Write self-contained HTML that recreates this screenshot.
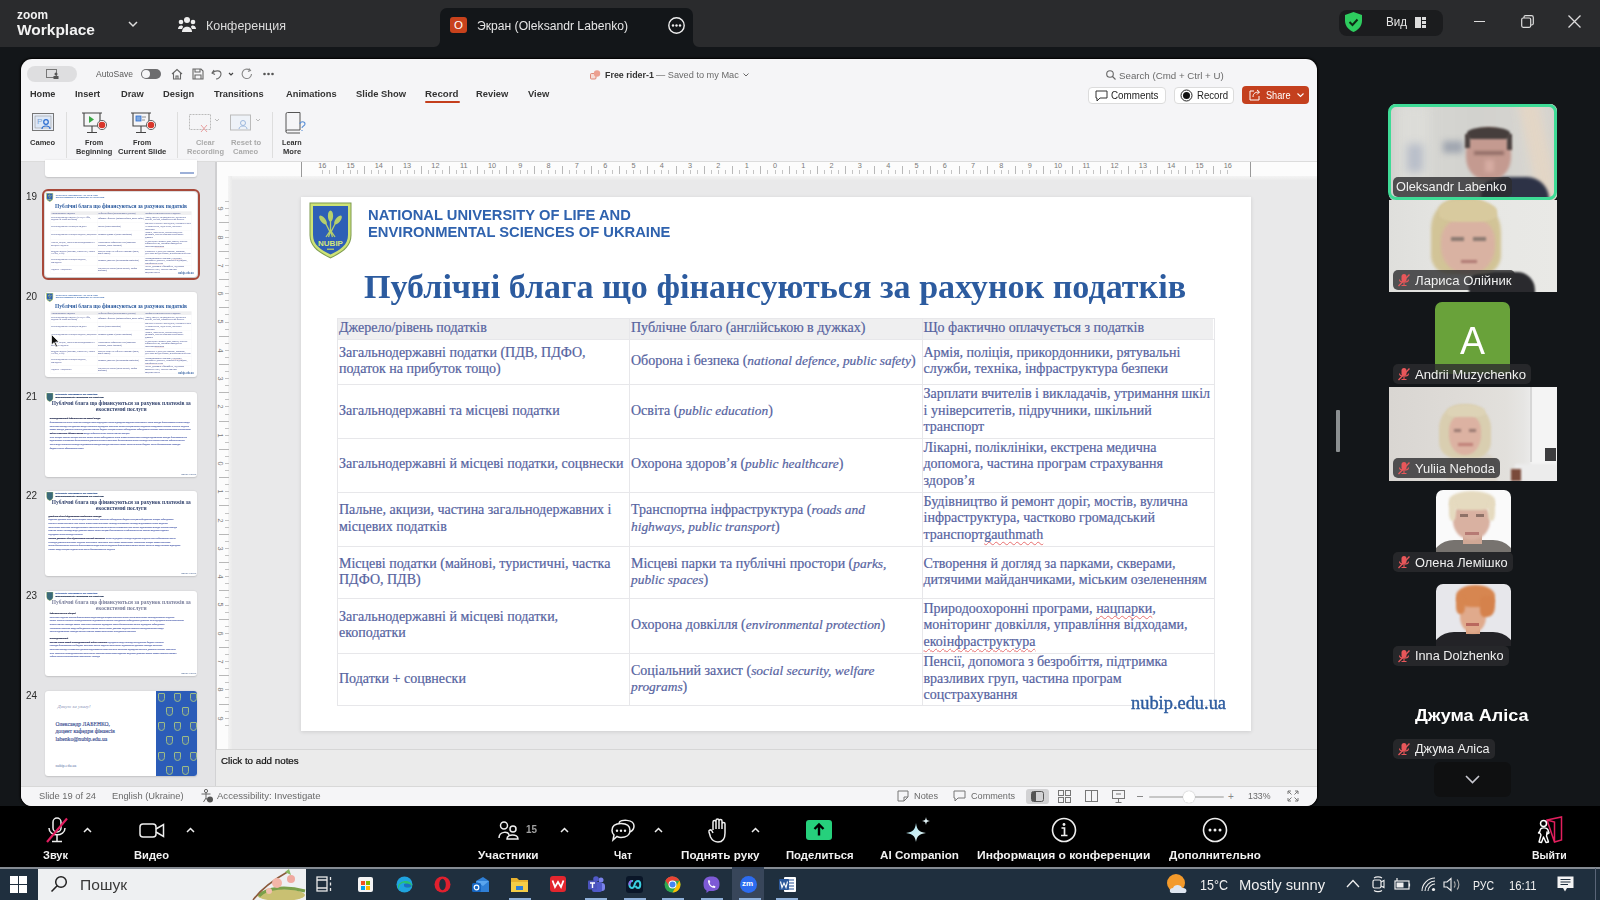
<!DOCTYPE html><html><head><meta charset="utf-8"><style>
*{margin:0;padding:0;box-sizing:border-box}
html,body{width:1600px;height:900px;overflow:hidden;background:#131619;font-family:"Liberation Sans",sans-serif}
.a{position:absolute}
.t{position:absolute;white-space:nowrap;line-height:1}
svg{position:absolute;overflow:visible}
.cell{font-family:'Liberation Serif',serif;font-size:14px;line-height:16.4px;white-space:nowrap;-webkit-text-stroke:0.2px}
.cell i{font-style:italic;font-size:13.4px}
.cell u{text-decoration:underline wavy #e87070;text-decoration-thickness:0.8px;text-underline-offset:2px;text-decoration-skip-ink:none}
</style></head><body>
<div class="a" style="left:0;top:0;width:1600px;height:47px;background:#2a2b2d"></div>
<div class="t" style="left:17.00px;top:7.80px;font-size:13px;color:#f2f2f2;font-weight:bold;transform:scaleX(0.9133);transform-origin:0 0;">zoom</div>
<div class="t" style="left:17.00px;top:22.13px;font-size:15.2px;color:#f2f2f2;font-weight:bold;transform:scaleX(1.0183);transform-origin:0 0;">Workplace</div>
<svg style="left:128px;top:21px" width="10" height="7"><path d="M1 1 L5 5 L9 1" stroke="#ddd" stroke-width="1.5" fill="none"/></svg>
<svg style="left:178px;top:16px" width="18" height="17" viewBox="0 0 18 17"><circle cx="9" cy="4" r="3" fill="#eee"/><circle cx="3" cy="6" r="2.3" fill="#eee"/><circle cx="15" cy="6" r="2.3" fill="#eee"/><path d="M4 16 C4 9 14 9 14 16 Z" fill="#eee"/><path d="M0 13 C0 9 5 8.5 5 11 L4 13Z" fill="#eee"/><path d="M18 13 C18 9 13 8.5 13 11 L14 13Z" fill="#eee"/></svg>
<div class="t" style="left:206.00px;top:20.22px;font-size:12.5px;color:#dcdcdc;transform:scaleX(0.9989);transform-origin:0 0;">Конференция</div>
<div class="a" style="left:440px;top:8px;width:253px;height:39px;background:#131619;border-radius:7px 7px 0 0"></div>
<svg style="left:434px;top:41px" width="6" height="6"><path d="M6 0 L6 6 L0 6 A6 6 0 0 0 6 0 Z" fill="#131619"/></svg>
<svg style="left:693px;top:41px" width="6" height="6"><path d="M0 0 L0 6 L6 6 A6 6 0 0 1 0 0 Z" fill="#131619"/></svg>
<div class="a" style="left:450px;top:17px;width:17px;height:16px;background:#c8421c;border-radius:3px"></div>
<div class="t" style="left:454.03px;top:19.77px;font-size:11.5px;color:#fff;">O</div>
<div class="t" style="left:477.00px;top:19.52px;font-size:12.5px;color:#e6e6e6;transform:scaleX(0.9713);transform-origin:0 0;">Экран (Oleksandr Labenko)</div>
<svg style="left:668px;top:17px" width="17" height="17"><circle cx="8.5" cy="8.5" r="7.7" stroke="#eee" stroke-width="1.4" fill="none"/><circle cx="5" cy="8.5" r="1.2" fill="#eee"/><circle cx="8.5" cy="8.5" r="1.2" fill="#eee"/><circle cx="12" cy="8.5" r="1.2" fill="#eee"/></svg>
<div class="a" style="left:1339px;top:10px;width:104px;height:26px;background:#1b1c1e;border-radius:8px"></div>
<svg style="left:1345px;top:12px" width="17" height="20" viewBox="0 0 17 20"><path d="M8.5 0 L17 3 L17 9 C17 14 13 18 8.5 20 C4 18 0 14 0 9 L0 3 Z" fill="#2ecc5f"/><path d="M4.5 10 L7.5 13 L12.5 7.5" stroke="#0d2a14" stroke-width="2" fill="none"/></svg>
<div class="t" style="left:1385.60px;top:16.42px;font-size:12.5px;color:#e6e6e6;transform:scaleX(0.9286);transform-origin:0 0;">Вид</div>
<svg style="left:1415px;top:17px" width="11" height="11"><rect x="0" y="0" width="6" height="11" fill="#ddd"/><rect x="7" y="0" width="4" height="3" fill="#ddd"/><rect x="7" y="4" width="4" height="3" fill="#ddd"/><rect x="7" y="8" width="4" height="3" fill="#ddd"/></svg>
<div class="a" style="left:1474px;top:21px;width:11px;height:1.3px;background:#ddd"></div>
<svg style="left:1521px;top:15px" width="13" height="13"><rect x="0.7" y="3" width="9" height="9.3" rx="1.5" stroke="#ddd" stroke-width="1.2" fill="none"/><path d="M3 3 L3 2 Q3 0.7 4.5 0.7 L10.5 0.7 Q12.3 0.7 12.3 2.5 L12.3 8.5 Q12.3 10 10.5 10 L9.7 10" stroke="#ddd" stroke-width="1.2" fill="none"/></svg>
<svg style="left:1568px;top:15px" width="13" height="13"><path d="M0.5 0.5 L12.5 12.5 M12.5 0.5 L0.5 12.5" stroke="#ddd" stroke-width="1.3"/></svg>
<div class="a" style="left:21px;top:59px;width:1296px;height:747px;background:#f5f5f7;border-radius:11px;box-shadow:0 0 2px 1px #000"></div>
<div class="a" style="left:27px;top:66px;width:50px;height:16px;background:#dedee0;border-radius:8px"></div>
<svg style="left:46px;top:69px" width="13" height="10"><rect x="0.5" y="0.5" width="10" height="8" stroke="#777" fill="none"/><circle cx="10" cy="5" r="1.5" fill="#555"/><rect x="7.5" y="7" width="5" height="3" fill="#555"/></svg>
<div class="t" style="left:96.40px;top:69.95px;font-size:8.8px;color:#5a5a5a;transform:scaleX(0.9696);transform-origin:0 0;">AutoSave</div>
<div class="a" style="left:141px;top:69px;width:20px;height:10px;background:#6d6d6f;border-radius:5px"></div>
<div class="a" style="left:142px;top:70px;width:8px;height:8px;background:#f5f5f7;border-radius:50%"></div>
<svg style="left:171px;top:68px" width="12" height="12"><path d="M1 6 L6 1.5 L11 6 M2.5 5 L2.5 11 L9.5 11 L9.5 5 M5 11 L5 8 L7 8 L7 11" stroke="#666" stroke-width="1.1" fill="none"/></svg>
<svg style="left:192px;top:68px" width="12" height="12"><path d="M1 1 L9 1 L11 3 L11 11 L1 11 Z M3 1 L3 4 L8 4 L8 1 M3 11 L3 7 L9 7 L9 11" stroke="#666" stroke-width="1.1" fill="none"/></svg>
<svg style="left:211px;top:68px" width="24" height="12"><path d="M3 2 L1 5 L4 6.5 M1.5 5 C4 2 10 2 10 6 C10 9 7 11 5 11" stroke="#666" stroke-width="1.1" fill="none"/><path d="M18 5 L20 7 L22 5" stroke="#444" stroke-width="1.2" fill="none"/></svg>
<svg style="left:241px;top:68px" width="12" height="12"><path d="M10.5 6 A4.7 4.7 0 1 1 8.5 2 M8 0.5 L9.5 2.5 L7 3.5" stroke="#888" stroke-width="1.1" fill="none"/></svg>
<svg style="left:263px;top:72px" width="11" height="4"><circle cx="1.5" cy="2" r="1.3" fill="#555"/><circle cx="5.5" cy="2" r="1.3" fill="#555"/><circle cx="9.5" cy="2" r="1.3" fill="#555"/></svg>
<svg style="left:590px;top:69px" width="11" height="11"><rect x="0.5" y="4.5" width="5.5" height="5.5" rx="1" fill="#f6dcd6" stroke="#d7705a" stroke-width="0.8"/><circle cx="7" cy="4.5" r="3.2" fill="#eca090"/></svg>
<div class="t" style="left:604.50px;top:70.04px;font-size:9.4px;color:#333;font-weight:bold;transform:scaleX(0.9473);transform-origin:0 0;">Free rider-1</div>
<div class="t" style="left:656.00px;top:70.04px;font-size:9.4px;color:#6a6a6a;transform:scaleX(0.9808);transform-origin:0 0;">— Saved to my Mac</div>
<svg style="left:743px;top:73px" width="6" height="4"><path d="M0.5 0.5 L3 3 L5.5 0.5" stroke="#666" stroke-width="1" fill="none"/></svg>
<svg style="left:1106px;top:70px" width="10" height="10"><circle cx="4" cy="4" r="3.3" stroke="#666" stroke-width="1.1" fill="none"/><path d="M6.5 6.5 L9.5 9.5" stroke="#666" stroke-width="1.1"/></svg>
<div class="t" style="left:1119.00px;top:70.54px;font-size:9.4px;color:#6a6a6a;transform:scaleX(1.0361);transform-origin:0 0;">Search (Cmd + Ctrl + U)</div>
<div class="t" style="left:29.75px;top:89.27px;font-size:9.6px;color:#333;font-weight:bold;transform:scaleX(0.9542);transform-origin:0 0;">Home</div>
<div class="t" style="left:75.25px;top:89.27px;font-size:9.6px;color:#333;font-weight:bold;transform:scaleX(0.9639);transform-origin:0 0;">Insert</div>
<div class="t" style="left:120.75px;top:89.27px;font-size:9.6px;color:#333;font-weight:bold;transform:scaleX(0.9691);transform-origin:0 0;">Draw</div>
<div class="t" style="left:162.70px;top:89.27px;font-size:9.6px;color:#333;font-weight:bold;transform:scaleX(0.9748);transform-origin:0 0;">Design</div>
<div class="t" style="left:214.20px;top:89.27px;font-size:9.6px;color:#333;font-weight:bold;transform:scaleX(0.9685);transform-origin:0 0;">Transitions</div>
<div class="t" style="left:285.50px;top:89.27px;font-size:9.6px;color:#333;font-weight:bold;transform:scaleX(0.9699);transform-origin:0 0;">Animations</div>
<div class="t" style="left:356.00px;top:89.27px;font-size:9.6px;color:#333;font-weight:bold;transform:scaleX(0.9803);transform-origin:0 0;">Slide Show</div>
<div class="t" style="left:425.00px;top:89.27px;font-size:9.6px;color:#333;font-weight:bold;transform:scaleX(1.0113);transform-origin:0 0;">Record</div>
<div class="t" style="left:476.25px;top:89.27px;font-size:9.6px;color:#333;font-weight:bold;transform:scaleX(0.9733);transform-origin:0 0;">Review</div>
<div class="t" style="left:527.50px;top:89.27px;font-size:9.6px;color:#333;font-weight:bold;transform:scaleX(0.9768);transform-origin:0 0;">View</div>
<div class="a" style="left:425px;top:101px;width:35px;height:2px;background:#c43e1c;border-radius:1px"></div>
<div class="a" style="left:1088px;top:87px;width:78px;height:17px;background:#fff;border:1px solid #dcdcdc;border-radius:4px"></div>
<svg style="left:1095px;top:90px" width="13" height="12"><path d="M1 1 L12 1 L12 8 L5 8 L2 11 L2 8 L1 8 Z" stroke="#333" stroke-width="1" fill="none"/></svg>
<div class="t" style="left:1111.00px;top:90.83px;font-size:10px;color:#222;transform:scaleX(0.9825);transform-origin:0 0;">Comments</div>
<div class="a" style="left:1174px;top:87px;width:60px;height:17px;background:#fff;border:1px solid #dcdcdc;border-radius:4px"></div>
<svg style="left:1180px;top:89px" width="13" height="13"><circle cx="6.5" cy="6.5" r="5.5" stroke="#222" stroke-width="1" fill="none"/><circle cx="6.5" cy="6.5" r="3.5" fill="#111"/></svg>
<div class="t" style="left:1197.00px;top:90.83px;font-size:10px;color:#222;transform:scaleX(0.9616);transform-origin:0 0;">Record</div>
<div class="a" style="left:1242px;top:86px;width:67px;height:18px;background:#c4401e;border-radius:4px"></div>
<svg style="left:1249px;top:89px" width="12" height="12"><path d="M5 2 L1 2 L1 11 L10 11 L10 7 M4 8 C4 4 7 3 10 3 M8 1 L10.5 3 L8 5.5" stroke="#fff" stroke-width="1" fill="none"/></svg>
<div class="t" style="left:1266.30px;top:90.83px;font-size:10px;color:#fff;transform:scaleX(0.9181);transform-origin:0 0;">Share</div>
<svg style="left:1297px;top:93px" width="7" height="5"><path d="M0.5 0.5 L3.5 3.5 L6.5 0.5" stroke="#fff" stroke-width="1.1" fill="none"/></svg>
<svg style="left:32px;top:113px" width="22" height="19"><rect x="0.5" y="0.5" width="21" height="17" fill="#e8eef8" stroke="#777"/><rect x="3" y="3" width="16" height="12" fill="#dce7f7" stroke="#999" stroke-width="0.6"/><text x="5" y="11" font-size="8" fill="#7aa0d0" font-family="Liberation Sans">P</text><circle cx="14" cy="9" r="2.3" fill="none" stroke="#2b6ccf" stroke-width="1.2"/><path d="M10 16 C10 12 18 12 18 16" fill="none" stroke="#2b6ccf" stroke-width="1.2"/></svg>
<div class="t" style="left:30.40px;top:138.70px;font-size:7.8px;color:#333;font-weight:bold;transform:scaleX(0.9689);transform-origin:0 0;">Cameo</div>
<div class="a" style="left:66px;top:112px;width:1px;height:46px;background:#dedede"></div>
<svg style="left:82px;top:112px" width="26" height="22"><path d="M0 1 L20 1 M2 1 L2 14 L18 14 L18 1 M10 14 L10 20 M5 20.5 L15 20.5" stroke="#444" stroke-width="1.1" fill="none"/><path d="M7 4 L12 7.5 L7 11 Z" fill="#3aa845"/><circle cx="20" cy="13" r="4.6" fill="#fff" stroke="#444" stroke-width="0.8"/><circle cx="20" cy="13" r="3.3" fill="#d9362b"/></svg>
<div class="t" style="left:84.85px;top:138.70px;font-size:7.8px;color:#333;font-weight:bold;transform:scaleX(0.9385);transform-origin:0 0;">From</div>
<div class="t" style="left:75.90px;top:147.70px;font-size:7.8px;color:#333;font-weight:bold;transform:scaleX(0.9494);transform-origin:0 0;">Beginning</div>
<svg style="left:131px;top:112px" width="26" height="22"><path d="M0 1 L20 1 M2 1 L2 14 L18 14 L18 1 M10 14 L10 20 M5 20.5 L15 20.5" stroke="#444" stroke-width="1.1" fill="none"/><rect x="5" y="4" width="5" height="5" fill="#7fa8de" stroke="#2b6ccf" stroke-width="0.8"/><path d="M11 5 L15 5 M11 8 L14 8" stroke="#777" stroke-width="0.8"/><circle cx="20" cy="13" r="4.6" fill="#fff" stroke="#444" stroke-width="0.8"/><circle cx="20" cy="13" r="3.3" fill="#d9362b"/></svg>
<div class="t" style="left:132.85px;top:138.70px;font-size:7.8px;color:#333;font-weight:bold;transform:scaleX(0.9385);transform-origin:0 0;">From</div>
<div class="t" style="left:117.80px;top:147.70px;font-size:7.8px;color:#333;font-weight:bold;transform:scaleX(0.9882);transform-origin:0 0;">Current Slide</div>
<div class="a" style="left:177px;top:112px;width:1px;height:46px;background:#dedede"></div>
<svg style="left:189px;top:114px" width="32" height="20"><rect x="0.5" y="0.5" width="21" height="15" fill="none" stroke="#bbb" stroke-dasharray="2 1"/><path d="M12 11 L18 18 M18 11 L12 18" stroke="#e9a0a0" stroke-width="1"/><path d="M26 5 L28 7 L30 5" stroke="#bbb" fill="none"/></svg>
<div class="t" style="left:195.70px;top:138.70px;font-size:7.8px;color:#aaa;font-weight:bold;transform:scaleX(0.9533);transform-origin:0 0;">Clear</div>
<div class="t" style="left:186.50px;top:147.70px;font-size:7.8px;color:#aaa;font-weight:bold;transform:scaleX(0.9593);transform-origin:0 0;">Recording</div>
<svg style="left:230px;top:112px" width="32" height="22"><rect x="0.5" y="3" width="20" height="15" fill="#eef2f8" stroke="#bbb"/><circle cx="13" cy="11" r="2.5" fill="none" stroke="#9db8de"/><path d="M9 17 C9 13 17 13 17 17" fill="none" stroke="#9db8de"/><path d="M26 7 L28 9 L30 7" stroke="#bbb" fill="none"/></svg>
<div class="t" style="left:230.95px;top:138.70px;font-size:7.8px;color:#aaa;font-weight:bold;transform:scaleX(0.9781);transform-origin:0 0;">Reset to</div>
<div class="t" style="left:233.40px;top:147.70px;font-size:7.8px;color:#aaa;font-weight:bold;transform:scaleX(0.9689);transform-origin:0 0;">Cameo</div>
<div class="a" style="left:272px;top:112px;width:1px;height:46px;background:#dedede"></div>
<svg style="left:285px;top:112px" width="22" height="22"><path d="M1 2 Q1 0.5 2.5 0.5 L15 0.5 L15 18 L2.5 18 Q1 18 1 19.5 Q1 21 2.5 21 L15 21 M1 2 L1 19.5" stroke="#555" stroke-width="1" fill="none"/><path d="M15 12 C15 9 20 9 20 12 C20 14 17 14 17 16 M17 18 L17 19" stroke="#5a8fd6" stroke-width="1.1" fill="none"/></svg>
<div class="t" style="left:282.15px;top:138.70px;font-size:7.8px;color:#333;font-weight:bold;transform:scaleX(0.9275);transform-origin:0 0;">Learn</div>
<div class="t" style="left:282.95px;top:147.70px;font-size:7.8px;color:#333;font-weight:bold;transform:scaleX(0.9712);transform-origin:0 0;">More</div>
<div class="a" style="left:21px;top:161px;width:1296px;height:1px;background:#dcdcdc"></div>
<div class="a" style="left:21px;top:162px;width:194px;height:624px;background:#e4e4e6"></div>
<div class="a" style="left:215px;top:162px;width:1px;height:624px;background:#d2d2d4"></div>
<div class="a" style="left:216px;top:162px;width:1101px;height:587px;background:#e9e9ea"></div>
<div class="a" style="left:216px;top:749px;width:1101px;height:1px;background:#d6d6d6"></div>
<div class="a" style="left:216px;top:750px;width:1101px;height:36px;background:#ebebeb"></div>
<div class="t" style="left:220.50px;top:756.93px;font-size:9.3px;color:#111;transform:scaleX(1.0511);transform-origin:0 0;-webkit-text-stroke:0.2px #111;">Click to add notes</div>
<div class="a" style="left:216px;top:162px;width:1101px;height:14px;background:#fcfcfc"></div>
<div class="a" style="left:228px;top:176px;width:1089px;height:4px;background:linear-gradient(#f4f4f4,#ebebeb)"></div>
<div class="a" style="left:216px;top:162px;width:12px;height:587px;background:#fcfcfc"></div>
<div class="a" style="left:228px;top:176px;width:4px;height:573px;background:linear-gradient(90deg,#f4f4f4,#ebebeb)"></div>
<div class="a" style="left:215px;top:162px;width:1.5px;height:587px;background:#cfcfd1"></div>
<div class="a" style="left:321.7px;top:170px;width:1px;height:3.5px;background:#c4c4c4"></div><div class="a" style="left:328.8px;top:170px;width:1px;height:3.5px;background:#c4c4c4"></div><div class="a" style="left:335.8px;top:166px;width:1px;height:7.5px;background:#b8b8b8"></div><div class="a" style="left:342.9px;top:170px;width:1px;height:3.5px;background:#c4c4c4"></div><div class="a" style="left:350.0px;top:170px;width:1px;height:3.5px;background:#c4c4c4"></div><div class="a" style="left:357.1px;top:170px;width:1px;height:3.5px;background:#c4c4c4"></div><div class="a" style="left:364.1px;top:166px;width:1px;height:7.5px;background:#b8b8b8"></div><div class="a" style="left:371.2px;top:170px;width:1px;height:3.5px;background:#c4c4c4"></div><div class="a" style="left:378.3px;top:170px;width:1px;height:3.5px;background:#c4c4c4"></div><div class="a" style="left:385.4px;top:170px;width:1px;height:3.5px;background:#c4c4c4"></div><div class="a" style="left:392.4px;top:166px;width:1px;height:7.5px;background:#b8b8b8"></div><div class="a" style="left:399.5px;top:170px;width:1px;height:3.5px;background:#c4c4c4"></div><div class="a" style="left:406.6px;top:170px;width:1px;height:3.5px;background:#c4c4c4"></div><div class="a" style="left:413.7px;top:170px;width:1px;height:3.5px;background:#c4c4c4"></div><div class="a" style="left:420.8px;top:166px;width:1px;height:7.5px;background:#b8b8b8"></div><div class="a" style="left:427.8px;top:170px;width:1px;height:3.5px;background:#c4c4c4"></div><div class="a" style="left:434.9px;top:170px;width:1px;height:3.5px;background:#c4c4c4"></div><div class="a" style="left:442.0px;top:170px;width:1px;height:3.5px;background:#c4c4c4"></div><div class="a" style="left:449.1px;top:166px;width:1px;height:7.5px;background:#b8b8b8"></div><div class="a" style="left:456.1px;top:170px;width:1px;height:3.5px;background:#c4c4c4"></div><div class="a" style="left:463.2px;top:170px;width:1px;height:3.5px;background:#c4c4c4"></div><div class="a" style="left:470.3px;top:170px;width:1px;height:3.5px;background:#c4c4c4"></div><div class="a" style="left:477.3px;top:166px;width:1px;height:7.5px;background:#b8b8b8"></div><div class="a" style="left:484.4px;top:170px;width:1px;height:3.5px;background:#c4c4c4"></div><div class="a" style="left:491.5px;top:170px;width:1px;height:3.5px;background:#c4c4c4"></div><div class="a" style="left:498.6px;top:170px;width:1px;height:3.5px;background:#c4c4c4"></div><div class="a" style="left:505.6px;top:166px;width:1px;height:7.5px;background:#b8b8b8"></div><div class="a" style="left:512.7px;top:170px;width:1px;height:3.5px;background:#c4c4c4"></div><div class="a" style="left:519.8px;top:170px;width:1px;height:3.5px;background:#c4c4c4"></div><div class="a" style="left:526.9px;top:170px;width:1px;height:3.5px;background:#c4c4c4"></div><div class="a" style="left:534.0px;top:166px;width:1px;height:7.5px;background:#b8b8b8"></div><div class="a" style="left:541.0px;top:170px;width:1px;height:3.5px;background:#c4c4c4"></div><div class="a" style="left:548.1px;top:170px;width:1px;height:3.5px;background:#c4c4c4"></div><div class="a" style="left:555.2px;top:170px;width:1px;height:3.5px;background:#c4c4c4"></div><div class="a" style="left:562.2px;top:166px;width:1px;height:7.5px;background:#b8b8b8"></div><div class="a" style="left:569.3px;top:170px;width:1px;height:3.5px;background:#c4c4c4"></div><div class="a" style="left:576.4px;top:170px;width:1px;height:3.5px;background:#c4c4c4"></div><div class="a" style="left:583.5px;top:170px;width:1px;height:3.5px;background:#c4c4c4"></div><div class="a" style="left:590.5px;top:166px;width:1px;height:7.5px;background:#b8b8b8"></div><div class="a" style="left:597.6px;top:170px;width:1px;height:3.5px;background:#c4c4c4"></div><div class="a" style="left:604.7px;top:170px;width:1px;height:3.5px;background:#c4c4c4"></div><div class="a" style="left:611.8px;top:170px;width:1px;height:3.5px;background:#c4c4c4"></div><div class="a" style="left:618.9px;top:166px;width:1px;height:7.5px;background:#b8b8b8"></div><div class="a" style="left:625.9px;top:170px;width:1px;height:3.5px;background:#c4c4c4"></div><div class="a" style="left:633.0px;top:170px;width:1px;height:3.5px;background:#c4c4c4"></div><div class="a" style="left:640.1px;top:170px;width:1px;height:3.5px;background:#c4c4c4"></div><div class="a" style="left:647.1px;top:166px;width:1px;height:7.5px;background:#b8b8b8"></div><div class="a" style="left:654.2px;top:170px;width:1px;height:3.5px;background:#c4c4c4"></div><div class="a" style="left:661.3px;top:170px;width:1px;height:3.5px;background:#c4c4c4"></div><div class="a" style="left:668.4px;top:170px;width:1px;height:3.5px;background:#c4c4c4"></div><div class="a" style="left:675.5px;top:166px;width:1px;height:7.5px;background:#b8b8b8"></div><div class="a" style="left:682.5px;top:170px;width:1px;height:3.5px;background:#c4c4c4"></div><div class="a" style="left:689.6px;top:170px;width:1px;height:3.5px;background:#c4c4c4"></div><div class="a" style="left:696.7px;top:170px;width:1px;height:3.5px;background:#c4c4c4"></div><div class="a" style="left:703.8px;top:166px;width:1px;height:7.5px;background:#b8b8b8"></div><div class="a" style="left:710.8px;top:170px;width:1px;height:3.5px;background:#c4c4c4"></div><div class="a" style="left:717.9px;top:170px;width:1px;height:3.5px;background:#c4c4c4"></div><div class="a" style="left:725.0px;top:170px;width:1px;height:3.5px;background:#c4c4c4"></div><div class="a" style="left:732.0px;top:166px;width:1px;height:7.5px;background:#b8b8b8"></div><div class="a" style="left:739.1px;top:170px;width:1px;height:3.5px;background:#c4c4c4"></div><div class="a" style="left:746.2px;top:170px;width:1px;height:3.5px;background:#c4c4c4"></div><div class="a" style="left:753.3px;top:170px;width:1px;height:3.5px;background:#c4c4c4"></div><div class="a" style="left:760.4px;top:166px;width:1px;height:7.5px;background:#b8b8b8"></div><div class="a" style="left:767.4px;top:170px;width:1px;height:3.5px;background:#c4c4c4"></div><div class="a" style="left:774.5px;top:170px;width:1px;height:3.5px;background:#c4c4c4"></div><div class="a" style="left:781.6px;top:170px;width:1px;height:3.5px;background:#c4c4c4"></div><div class="a" style="left:788.6px;top:166px;width:1px;height:7.5px;background:#b8b8b8"></div><div class="a" style="left:795.7px;top:170px;width:1px;height:3.5px;background:#c4c4c4"></div><div class="a" style="left:802.8px;top:170px;width:1px;height:3.5px;background:#c4c4c4"></div><div class="a" style="left:809.9px;top:170px;width:1px;height:3.5px;background:#c4c4c4"></div><div class="a" style="left:817.0px;top:166px;width:1px;height:7.5px;background:#b8b8b8"></div><div class="a" style="left:824.0px;top:170px;width:1px;height:3.5px;background:#c4c4c4"></div><div class="a" style="left:831.1px;top:170px;width:1px;height:3.5px;background:#c4c4c4"></div><div class="a" style="left:838.2px;top:170px;width:1px;height:3.5px;background:#c4c4c4"></div><div class="a" style="left:845.2px;top:166px;width:1px;height:7.5px;background:#b8b8b8"></div><div class="a" style="left:852.3px;top:170px;width:1px;height:3.5px;background:#c4c4c4"></div><div class="a" style="left:859.4px;top:170px;width:1px;height:3.5px;background:#c4c4c4"></div><div class="a" style="left:866.5px;top:170px;width:1px;height:3.5px;background:#c4c4c4"></div><div class="a" style="left:873.5px;top:166px;width:1px;height:7.5px;background:#b8b8b8"></div><div class="a" style="left:880.6px;top:170px;width:1px;height:3.5px;background:#c4c4c4"></div><div class="a" style="left:887.7px;top:170px;width:1px;height:3.5px;background:#c4c4c4"></div><div class="a" style="left:894.8px;top:170px;width:1px;height:3.5px;background:#c4c4c4"></div><div class="a" style="left:901.9px;top:166px;width:1px;height:7.5px;background:#b8b8b8"></div><div class="a" style="left:908.9px;top:170px;width:1px;height:3.5px;background:#c4c4c4"></div><div class="a" style="left:916.0px;top:170px;width:1px;height:3.5px;background:#c4c4c4"></div><div class="a" style="left:923.1px;top:170px;width:1px;height:3.5px;background:#c4c4c4"></div><div class="a" style="left:930.1px;top:166px;width:1px;height:7.5px;background:#b8b8b8"></div><div class="a" style="left:937.2px;top:170px;width:1px;height:3.5px;background:#c4c4c4"></div><div class="a" style="left:944.3px;top:170px;width:1px;height:3.5px;background:#c4c4c4"></div><div class="a" style="left:951.4px;top:170px;width:1px;height:3.5px;background:#c4c4c4"></div><div class="a" style="left:958.5px;top:166px;width:1px;height:7.5px;background:#b8b8b8"></div><div class="a" style="left:965.5px;top:170px;width:1px;height:3.5px;background:#c4c4c4"></div><div class="a" style="left:972.6px;top:170px;width:1px;height:3.5px;background:#c4c4c4"></div><div class="a" style="left:979.7px;top:170px;width:1px;height:3.5px;background:#c4c4c4"></div><div class="a" style="left:986.8px;top:166px;width:1px;height:7.5px;background:#b8b8b8"></div><div class="a" style="left:993.8px;top:170px;width:1px;height:3.5px;background:#c4c4c4"></div><div class="a" style="left:1000.9px;top:170px;width:1px;height:3.5px;background:#c4c4c4"></div><div class="a" style="left:1008.0px;top:170px;width:1px;height:3.5px;background:#c4c4c4"></div><div class="a" style="left:1015.0px;top:166px;width:1px;height:7.5px;background:#b8b8b8"></div><div class="a" style="left:1022.1px;top:170px;width:1px;height:3.5px;background:#c4c4c4"></div><div class="a" style="left:1029.2px;top:170px;width:1px;height:3.5px;background:#c4c4c4"></div><div class="a" style="left:1036.3px;top:170px;width:1px;height:3.5px;background:#c4c4c4"></div><div class="a" style="left:1043.3px;top:166px;width:1px;height:7.5px;background:#b8b8b8"></div><div class="a" style="left:1050.4px;top:170px;width:1px;height:3.5px;background:#c4c4c4"></div><div class="a" style="left:1057.5px;top:170px;width:1px;height:3.5px;background:#c4c4c4"></div><div class="a" style="left:1064.6px;top:170px;width:1px;height:3.5px;background:#c4c4c4"></div><div class="a" style="left:1071.7px;top:166px;width:1px;height:7.5px;background:#b8b8b8"></div><div class="a" style="left:1078.7px;top:170px;width:1px;height:3.5px;background:#c4c4c4"></div><div class="a" style="left:1085.8px;top:170px;width:1px;height:3.5px;background:#c4c4c4"></div><div class="a" style="left:1092.9px;top:170px;width:1px;height:3.5px;background:#c4c4c4"></div><div class="a" style="left:1100.0px;top:166px;width:1px;height:7.5px;background:#b8b8b8"></div><div class="a" style="left:1107.0px;top:170px;width:1px;height:3.5px;background:#c4c4c4"></div><div class="a" style="left:1114.1px;top:170px;width:1px;height:3.5px;background:#c4c4c4"></div><div class="a" style="left:1121.2px;top:170px;width:1px;height:3.5px;background:#c4c4c4"></div><div class="a" style="left:1128.2px;top:166px;width:1px;height:7.5px;background:#b8b8b8"></div><div class="a" style="left:1135.3px;top:170px;width:1px;height:3.5px;background:#c4c4c4"></div><div class="a" style="left:1142.4px;top:170px;width:1px;height:3.5px;background:#c4c4c4"></div><div class="a" style="left:1149.5px;top:170px;width:1px;height:3.5px;background:#c4c4c4"></div><div class="a" style="left:1156.5px;top:166px;width:1px;height:7.5px;background:#b8b8b8"></div><div class="a" style="left:1163.6px;top:170px;width:1px;height:3.5px;background:#c4c4c4"></div><div class="a" style="left:1170.7px;top:170px;width:1px;height:3.5px;background:#c4c4c4"></div><div class="a" style="left:1177.8px;top:170px;width:1px;height:3.5px;background:#c4c4c4"></div><div class="a" style="left:1184.8px;top:166px;width:1px;height:7.5px;background:#b8b8b8"></div><div class="a" style="left:1191.9px;top:170px;width:1px;height:3.5px;background:#c4c4c4"></div><div class="a" style="left:1199.0px;top:170px;width:1px;height:3.5px;background:#c4c4c4"></div><div class="a" style="left:1206.1px;top:170px;width:1px;height:3.5px;background:#c4c4c4"></div><div class="a" style="left:1213.2px;top:166px;width:1px;height:7.5px;background:#b8b8b8"></div><div class="a" style="left:1220.2px;top:170px;width:1px;height:3.5px;background:#c4c4c4"></div><div class="a" style="left:1227.3px;top:170px;width:1px;height:3.5px;background:#c4c4c4"></div>
<div class="t" style="left:318.14px;top:161.62px;font-size:7.3px;color:#7a7a7a;">16</div>
<div class="t" style="left:346.44px;top:161.62px;font-size:7.3px;color:#7a7a7a;">15</div>
<div class="t" style="left:374.74px;top:161.62px;font-size:7.3px;color:#7a7a7a;">14</div>
<div class="t" style="left:403.04px;top:161.62px;font-size:7.3px;color:#7a7a7a;">13</div>
<div class="t" style="left:431.34px;top:161.62px;font-size:7.3px;color:#7a7a7a;">12</div>
<div class="t" style="left:459.91px;top:161.62px;font-size:7.3px;color:#7a7a7a;">11</div>
<div class="t" style="left:487.94px;top:161.62px;font-size:7.3px;color:#7a7a7a;">10</div>
<div class="t" style="left:518.27px;top:161.62px;font-size:7.3px;color:#7a7a7a;">9</div>
<div class="t" style="left:546.57px;top:161.62px;font-size:7.3px;color:#7a7a7a;">8</div>
<div class="t" style="left:574.87px;top:161.62px;font-size:7.3px;color:#7a7a7a;">7</div>
<div class="t" style="left:603.17px;top:161.62px;font-size:7.3px;color:#7a7a7a;">6</div>
<div class="t" style="left:631.47px;top:161.62px;font-size:7.3px;color:#7a7a7a;">5</div>
<div class="t" style="left:659.77px;top:161.62px;font-size:7.3px;color:#7a7a7a;">4</div>
<div class="t" style="left:688.07px;top:161.62px;font-size:7.3px;color:#7a7a7a;">3</div>
<div class="t" style="left:716.37px;top:161.62px;font-size:7.3px;color:#7a7a7a;">2</div>
<div class="t" style="left:744.67px;top:161.62px;font-size:7.3px;color:#7a7a7a;">1</div>
<div class="t" style="left:772.97px;top:161.62px;font-size:7.3px;color:#7a7a7a;">0</div>
<div class="t" style="left:801.27px;top:161.62px;font-size:7.3px;color:#7a7a7a;">1</div>
<div class="t" style="left:829.57px;top:161.62px;font-size:7.3px;color:#7a7a7a;">2</div>
<div class="t" style="left:857.87px;top:161.62px;font-size:7.3px;color:#7a7a7a;">3</div>
<div class="t" style="left:886.17px;top:161.62px;font-size:7.3px;color:#7a7a7a;">4</div>
<div class="t" style="left:914.47px;top:161.62px;font-size:7.3px;color:#7a7a7a;">5</div>
<div class="t" style="left:942.77px;top:161.62px;font-size:7.3px;color:#7a7a7a;">6</div>
<div class="t" style="left:971.07px;top:161.62px;font-size:7.3px;color:#7a7a7a;">7</div>
<div class="t" style="left:999.37px;top:161.62px;font-size:7.3px;color:#7a7a7a;">8</div>
<div class="t" style="left:1027.67px;top:161.62px;font-size:7.3px;color:#7a7a7a;">9</div>
<div class="t" style="left:1053.94px;top:161.62px;font-size:7.3px;color:#7a7a7a;">10</div>
<div class="t" style="left:1082.51px;top:161.62px;font-size:7.3px;color:#7a7a7a;">11</div>
<div class="t" style="left:1110.54px;top:161.62px;font-size:7.3px;color:#7a7a7a;">12</div>
<div class="t" style="left:1138.84px;top:161.62px;font-size:7.3px;color:#7a7a7a;">13</div>
<div class="t" style="left:1167.14px;top:161.62px;font-size:7.3px;color:#7a7a7a;">14</div>
<div class="t" style="left:1195.44px;top:161.62px;font-size:7.3px;color:#7a7a7a;">15</div>
<div class="t" style="left:1223.74px;top:161.62px;font-size:7.3px;color:#7a7a7a;">16</div>
<div class="a" style="left:300.5px;top:162px;width:1px;height:15px;background:#999"></div>
<div class="a" style="left:1249.5px;top:162px;width:1px;height:15px;background:#999"></div>
<div class="a" style="left:225px;top:201.2px;width:3.5px;height:1px;background:#c4c4c4"></div><div class="a" style="left:225px;top:208.3px;width:3.5px;height:1px;background:#c4c4c4"></div><div class="a" style="left:225px;top:215.4px;width:3.5px;height:1px;background:#c4c4c4"></div><div class="a" style="left:219px;top:222.4px;width:9.5px;height:1px;background:#b8b8b8"></div><div class="a" style="left:225px;top:229.5px;width:3.5px;height:1px;background:#c4c4c4"></div><div class="a" style="left:225px;top:236.6px;width:3.5px;height:1px;background:#c4c4c4"></div><div class="a" style="left:225px;top:243.7px;width:3.5px;height:1px;background:#c4c4c4"></div><div class="a" style="left:219px;top:250.8px;width:9.5px;height:1px;background:#b8b8b8"></div><div class="a" style="left:225px;top:257.8px;width:3.5px;height:1px;background:#c4c4c4"></div><div class="a" style="left:225px;top:264.9px;width:3.5px;height:1px;background:#c4c4c4"></div><div class="a" style="left:225px;top:272.0px;width:3.5px;height:1px;background:#c4c4c4"></div><div class="a" style="left:219px;top:279.0px;width:9.5px;height:1px;background:#b8b8b8"></div><div class="a" style="left:225px;top:286.1px;width:3.5px;height:1px;background:#c4c4c4"></div><div class="a" style="left:225px;top:293.2px;width:3.5px;height:1px;background:#c4c4c4"></div><div class="a" style="left:225px;top:300.3px;width:3.5px;height:1px;background:#c4c4c4"></div><div class="a" style="left:219px;top:307.4px;width:9.5px;height:1px;background:#b8b8b8"></div><div class="a" style="left:225px;top:314.4px;width:3.5px;height:1px;background:#c4c4c4"></div><div class="a" style="left:225px;top:321.5px;width:3.5px;height:1px;background:#c4c4c4"></div><div class="a" style="left:225px;top:328.6px;width:3.5px;height:1px;background:#c4c4c4"></div><div class="a" style="left:219px;top:335.6px;width:9.5px;height:1px;background:#b8b8b8"></div><div class="a" style="left:225px;top:342.7px;width:3.5px;height:1px;background:#c4c4c4"></div><div class="a" style="left:225px;top:349.8px;width:3.5px;height:1px;background:#c4c4c4"></div><div class="a" style="left:225px;top:356.9px;width:3.5px;height:1px;background:#c4c4c4"></div><div class="a" style="left:219px;top:363.9px;width:9.5px;height:1px;background:#b8b8b8"></div><div class="a" style="left:225px;top:371.0px;width:3.5px;height:1px;background:#c4c4c4"></div><div class="a" style="left:225px;top:378.1px;width:3.5px;height:1px;background:#c4c4c4"></div><div class="a" style="left:225px;top:385.2px;width:3.5px;height:1px;background:#c4c4c4"></div><div class="a" style="left:219px;top:392.2px;width:9.5px;height:1px;background:#b8b8b8"></div><div class="a" style="left:225px;top:399.3px;width:3.5px;height:1px;background:#c4c4c4"></div><div class="a" style="left:225px;top:406.4px;width:3.5px;height:1px;background:#c4c4c4"></div><div class="a" style="left:225px;top:413.5px;width:3.5px;height:1px;background:#c4c4c4"></div><div class="a" style="left:219px;top:420.6px;width:9.5px;height:1px;background:#b8b8b8"></div><div class="a" style="left:225px;top:427.6px;width:3.5px;height:1px;background:#c4c4c4"></div><div class="a" style="left:225px;top:434.7px;width:3.5px;height:1px;background:#c4c4c4"></div><div class="a" style="left:225px;top:441.8px;width:3.5px;height:1px;background:#c4c4c4"></div><div class="a" style="left:219px;top:448.9px;width:9.5px;height:1px;background:#b8b8b8"></div><div class="a" style="left:225px;top:455.9px;width:3.5px;height:1px;background:#c4c4c4"></div><div class="a" style="left:225px;top:463.0px;width:3.5px;height:1px;background:#c4c4c4"></div><div class="a" style="left:225px;top:470.1px;width:3.5px;height:1px;background:#c4c4c4"></div><div class="a" style="left:219px;top:477.1px;width:9.5px;height:1px;background:#b8b8b8"></div><div class="a" style="left:225px;top:484.2px;width:3.5px;height:1px;background:#c4c4c4"></div><div class="a" style="left:225px;top:491.3px;width:3.5px;height:1px;background:#c4c4c4"></div><div class="a" style="left:225px;top:498.4px;width:3.5px;height:1px;background:#c4c4c4"></div><div class="a" style="left:219px;top:505.4px;width:9.5px;height:1px;background:#b8b8b8"></div><div class="a" style="left:225px;top:512.5px;width:3.5px;height:1px;background:#c4c4c4"></div><div class="a" style="left:225px;top:519.6px;width:3.5px;height:1px;background:#c4c4c4"></div><div class="a" style="left:225px;top:526.7px;width:3.5px;height:1px;background:#c4c4c4"></div><div class="a" style="left:219px;top:533.8px;width:9.5px;height:1px;background:#b8b8b8"></div><div class="a" style="left:225px;top:540.8px;width:3.5px;height:1px;background:#c4c4c4"></div><div class="a" style="left:225px;top:547.9px;width:3.5px;height:1px;background:#c4c4c4"></div><div class="a" style="left:225px;top:555.0px;width:3.5px;height:1px;background:#c4c4c4"></div><div class="a" style="left:219px;top:562.0px;width:9.5px;height:1px;background:#b8b8b8"></div><div class="a" style="left:225px;top:569.1px;width:3.5px;height:1px;background:#c4c4c4"></div><div class="a" style="left:225px;top:576.2px;width:3.5px;height:1px;background:#c4c4c4"></div><div class="a" style="left:225px;top:583.3px;width:3.5px;height:1px;background:#c4c4c4"></div><div class="a" style="left:219px;top:590.4px;width:9.5px;height:1px;background:#b8b8b8"></div><div class="a" style="left:225px;top:597.4px;width:3.5px;height:1px;background:#c4c4c4"></div><div class="a" style="left:225px;top:604.5px;width:3.5px;height:1px;background:#c4c4c4"></div><div class="a" style="left:225px;top:611.6px;width:3.5px;height:1px;background:#c4c4c4"></div><div class="a" style="left:219px;top:618.6px;width:9.5px;height:1px;background:#b8b8b8"></div><div class="a" style="left:225px;top:625.7px;width:3.5px;height:1px;background:#c4c4c4"></div><div class="a" style="left:225px;top:632.8px;width:3.5px;height:1px;background:#c4c4c4"></div><div class="a" style="left:225px;top:639.9px;width:3.5px;height:1px;background:#c4c4c4"></div><div class="a" style="left:219px;top:647.0px;width:9.5px;height:1px;background:#b8b8b8"></div><div class="a" style="left:225px;top:654.0px;width:3.5px;height:1px;background:#c4c4c4"></div><div class="a" style="left:225px;top:661.1px;width:3.5px;height:1px;background:#c4c4c4"></div><div class="a" style="left:225px;top:668.2px;width:3.5px;height:1px;background:#c4c4c4"></div><div class="a" style="left:219px;top:675.2px;width:9.5px;height:1px;background:#b8b8b8"></div><div class="a" style="left:225px;top:682.3px;width:3.5px;height:1px;background:#c4c4c4"></div><div class="a" style="left:225px;top:689.4px;width:3.5px;height:1px;background:#c4c4c4"></div><div class="a" style="left:225px;top:696.5px;width:3.5px;height:1px;background:#c4c4c4"></div><div class="a" style="left:219px;top:703.5px;width:9.5px;height:1px;background:#b8b8b8"></div><div class="a" style="left:225px;top:710.6px;width:3.5px;height:1px;background:#c4c4c4"></div><div class="a" style="left:225px;top:717.7px;width:3.5px;height:1px;background:#c4c4c4"></div><div class="a" style="left:225px;top:724.8px;width:3.5px;height:1px;background:#c4c4c4"></div><div class="t" style="left:216.5px;top:205.2px;width:7px;height:7px;font-size:7.3px;line-height:7px;text-align:center;color:#7a7a7a;transform:rotate(90deg)">9</div><div class="t" style="left:216.5px;top:233.5px;width:7px;height:7px;font-size:7.3px;line-height:7px;text-align:center;color:#7a7a7a;transform:rotate(90deg)">8</div><div class="t" style="left:216.5px;top:261.8px;width:7px;height:7px;font-size:7.3px;line-height:7px;text-align:center;color:#7a7a7a;transform:rotate(90deg)">7</div><div class="t" style="left:216.5px;top:290.1px;width:7px;height:7px;font-size:7.3px;line-height:7px;text-align:center;color:#7a7a7a;transform:rotate(90deg)">6</div><div class="t" style="left:216.5px;top:318.4px;width:7px;height:7px;font-size:7.3px;line-height:7px;text-align:center;color:#7a7a7a;transform:rotate(90deg)">5</div><div class="t" style="left:216.5px;top:346.7px;width:7px;height:7px;font-size:7.3px;line-height:7px;text-align:center;color:#7a7a7a;transform:rotate(90deg)">4</div><div class="t" style="left:216.5px;top:375.0px;width:7px;height:7px;font-size:7.3px;line-height:7px;text-align:center;color:#7a7a7a;transform:rotate(90deg)">3</div><div class="t" style="left:216.5px;top:403.3px;width:7px;height:7px;font-size:7.3px;line-height:7px;text-align:center;color:#7a7a7a;transform:rotate(90deg)">2</div><div class="t" style="left:216.5px;top:431.6px;width:7px;height:7px;font-size:7.3px;line-height:7px;text-align:center;color:#7a7a7a;transform:rotate(90deg)">1</div><div class="t" style="left:216.5px;top:459.9px;width:7px;height:7px;font-size:7.3px;line-height:7px;text-align:center;color:#7a7a7a;transform:rotate(90deg)">0</div><div class="t" style="left:216.5px;top:488.2px;width:7px;height:7px;font-size:7.3px;line-height:7px;text-align:center;color:#7a7a7a;transform:rotate(90deg)">1</div><div class="t" style="left:216.5px;top:516.5px;width:7px;height:7px;font-size:7.3px;line-height:7px;text-align:center;color:#7a7a7a;transform:rotate(90deg)">2</div><div class="t" style="left:216.5px;top:544.8px;width:7px;height:7px;font-size:7.3px;line-height:7px;text-align:center;color:#7a7a7a;transform:rotate(90deg)">3</div><div class="t" style="left:216.5px;top:573.1px;width:7px;height:7px;font-size:7.3px;line-height:7px;text-align:center;color:#7a7a7a;transform:rotate(90deg)">4</div><div class="t" style="left:216.5px;top:601.4px;width:7px;height:7px;font-size:7.3px;line-height:7px;text-align:center;color:#7a7a7a;transform:rotate(90deg)">5</div><div class="t" style="left:216.5px;top:629.7px;width:7px;height:7px;font-size:7.3px;line-height:7px;text-align:center;color:#7a7a7a;transform:rotate(90deg)">6</div><div class="t" style="left:216.5px;top:658.0px;width:7px;height:7px;font-size:7.3px;line-height:7px;text-align:center;color:#7a7a7a;transform:rotate(90deg)">7</div><div class="t" style="left:216.5px;top:686.3px;width:7px;height:7px;font-size:7.3px;line-height:7px;text-align:center;color:#7a7a7a;transform:rotate(90deg)">8</div><div class="t" style="left:216.5px;top:714.6px;width:7px;height:7px;font-size:7.3px;line-height:7px;text-align:center;color:#7a7a7a;transform:rotate(90deg)">9</div>
<div class="a" style="left:21px;top:786px;width:1296px;height:1px;background:#d8d8d8"></div>
<div class="a" style="left:21px;top:787px;width:1296px;height:19px;background:#f5f5f7;border-radius:0 0 11px 11px"></div>
<div class="t" style="left:39.00px;top:791.98px;font-size:9px;color:#6a6a6a;transform:scaleX(1.0356);transform-origin:0 0;">Slide 19 of 24</div>
<div class="t" style="left:112.40px;top:791.98px;font-size:9px;color:#6a6a6a;transform:scaleX(1.0358);transform-origin:0 0;">English (Ukraine)</div>
<svg style="left:201px;top:789px" width="12" height="14"><circle cx="5" cy="2" r="1.6" fill="none" stroke="#666"/><path d="M0.5 5 L9.5 5 M5 4 L5 9 L2.5 13 M5 9 L7 12" stroke="#666" fill="none"/><circle cx="9" cy="10.5" r="3" fill="#555"/></svg>
<div class="t" style="left:217.00px;top:791.98px;font-size:9px;color:#6a6a6a;transform:scaleX(1.0611);transform-origin:0 0;">Accessibility: Investigate</div>
<svg style="left:897px;top:790px" width="12" height="12"><path d="M1 1 L11 1 L11 7 L7 11 L1 11 Z M7 11 L7 7 L11 7" stroke="#777" fill="none"/></svg>
<div class="t" style="left:914.00px;top:791.98px;font-size:9px;color:#6a6a6a;transform:scaleX(1.0208);transform-origin:0 0;">Notes</div>
<svg style="left:953px;top:790px" width="13" height="12"><path d="M1 1 L12 1 L12 8 L5 8 L2 11 L2 8 L1 8 Z" stroke="#777" fill="none"/></svg>
<div class="t" style="left:970.60px;top:791.98px;font-size:9px;color:#6a6a6a;transform:scaleX(1.0112);transform-origin:0 0;">Comments</div>
<div class="a" style="left:1026px;top:789px;width:23px;height:15px;background:#d2d2d4;border-radius:3px"></div>
<svg style="left:1031px;top:791px" width="13" height="11"><rect x="0.5" y="0.5" width="12" height="10" rx="2" fill="none" stroke="#555"/><rect x="1" y="1" width="4" height="9" fill="#555"/></svg>
<svg style="left:1058px;top:790px" width="13" height="13"><rect x="0.5" y="0.5" width="5" height="5" fill="none" stroke="#777"/><rect x="7.5" y="0.5" width="5" height="5" fill="none" stroke="#777"/><rect x="0.5" y="7.5" width="5" height="5" fill="none" stroke="#777"/><rect x="7.5" y="7.5" width="5" height="5" fill="none" stroke="#777"/></svg>
<svg style="left:1085px;top:790px" width="13" height="12"><rect x="0.5" y="0.5" width="12" height="11" fill="none" stroke="#777"/><path d="M6.5 0.5 L6.5 11.5" stroke="#777"/></svg>
<svg style="left:1112px;top:790px" width="13" height="13"><rect x="0.5" y="0.5" width="12" height="8" fill="none" stroke="#777"/><path d="M6.5 8.5 L6.5 12 M3.5 12.5 L9.5 12.5 M4 4 L9 4" stroke="#777"/></svg>
<div class="a" style="left:1137px;top:796px;width:6px;height:1px;background:#888"></div>
<div class="a" style="left:1149px;top:796px;width:75px;height:2px;background:#c6c6c6;border-radius:1px"></div>
<div class="a" style="left:1183px;top:791px;width:12px;height:12px;background:#fff;border-radius:50%;box-shadow:0 0 1px #999"></div>
<div class="t" style="left:1228px;top:792px;font-size:10px;color:#888">+</div>
<div class="t" style="left:1248.00px;top:791.98px;font-size:9px;color:#6a6a6a;transform:scaleX(0.9775);transform-origin:0 0;">133%</div>
<svg style="left:1287px;top:790px" width="12" height="12"><path d="M1 4 L1 1 L4 1 M1 1 L4.5 4.5 M8 1 L11 1 L11 4 M11 1 L7.5 4.5 M1 8 L1 11 L4 11 M1 11 L4.5 7.5 M11 8 L11 11 L8 11 M11 11 L7.5 7.5" stroke="#777" fill="none"/></svg>
<div class="a" style="left:301px;top:197px;width:950px;height:534px;background:#fff;box-shadow:0 1px 4px rgba(0,0,0,0.12);overflow:hidden"><div class="a" style="left:-301px;top:-197px;width:1600px;height:900px"><svg style="left:309px;top:202px" width="43" height="57" viewBox="0 0 43 57"><path d="M0.5 0.5 L42.5 0.5 L42.5 33 C42.5 45 33 51 21.5 56.5 C10 51 0.5 45 0.5 33 Z" fill="#7c9a50"/><path d="M1.5 1.5 L41.5 1.5 L41.5 33 C41.5 44.5 32.5 50 21.5 55.3 C10.5 50 1.5 44.5 1.5 33 Z" fill="#cde276"/><path d="M4 4 L39 4 L39 33 C39 43 31 48 21.5 52.5 C12 48 4 43 4 33 Z" fill="#2e5fb6"/><ellipse cx="21.5" cy="14" rx="2.6" ry="5.5" fill="#b6cf6c"/><ellipse cx="14" cy="18" rx="2.4" ry="5.5" transform="rotate(-38 14 18)" fill="#b6cf6c"/><ellipse cx="29" cy="18" rx="2.4" ry="5.5" transform="rotate(38 29 18)" fill="#b6cf6c"/><path d="M21.5 19 L21.5 30 M17 22 L21 30 M26 22 L22 30 M17 35 L21.5 28.5 L26 35 M19.5 35 L21.5 29 L23.5 35" stroke="#b6cf6c" stroke-width="1.3" fill="none"/><text x="21.5" y="43.5" font-size="8" font-weight="bold" text-anchor="middle" fill="#d2e57a" font-family="Liberation Sans">NUBIP</text><rect x="18" y="46.5" width="7" height="1.5" fill="#a8c070"/></svg><div class="t" style="left:367.50px;top:207.64px;font-size:14.6px;color:#2f62ae;font-weight:bold;transform:scaleX(1.0090);transform-origin:0 0;">NATIONAL UNIVERSITY OF LIFE AND</div><div class="t" style="left:367.50px;top:225.14px;font-size:14.6px;color:#2f62ae;font-weight:bold;transform:scaleX(1.0097);transform-origin:0 0;">ENVIRONMENTAL SCIENCES OF UKRAINE</div><div class="t" style="left:364.00px;top:270.27px;font-size:34px;color:#2c5b9f;font-weight:bold;font-family:'Liberation Serif',serif;transform:scaleX(1.0022);transform-origin:0 0;">Публічні блага що фінансуються за рахунок податків</div><div class="a" style="left:337px;top:318px;width:876px;height:20.5px;background:#efeff0"></div><div class="a" style="left:337px;top:318.2px;width:877px;height:1px;background:#e7e7ea"></div><div class="a" style="left:337px;top:338.5px;width:877px;height:1px;background:#e7e7ea"></div><div class="a" style="left:337px;top:384.2px;width:877px;height:1px;background:#e7e7ea"></div><div class="a" style="left:337px;top:437.8px;width:877px;height:1px;background:#e7e7ea"></div><div class="a" style="left:337px;top:491.5px;width:877px;height:1px;background:#e7e7ea"></div><div class="a" style="left:337px;top:545.5px;width:877px;height:1px;background:#e7e7ea"></div><div class="a" style="left:337px;top:598.3px;width:877px;height:1px;background:#e7e7ea"></div><div class="a" style="left:337px;top:652.5px;width:877px;height:1px;background:#e7e7ea"></div><div class="a" style="left:337px;top:705.3px;width:877px;height:1px;background:#e7e7ea"></div><div class="a" style="left:337.0px;top:318.2px;width:1px;height:387px;background:#e7e7ea"></div><div class="a" style="left:629.0px;top:318.2px;width:1px;height:387px;background:#e7e7ea"></div><div class="a" style="left:921.5px;top:318.2px;width:1px;height:387px;background:#e7e7ea"></div><div class="a" style="left:1213.5px;top:318.2px;width:1px;height:387px;background:#e7e7ea"></div><div class="a cell" style="left:339.0px;top:320.4px;color:#56639f">Джерело/рівень податків</div><div class="a cell" style="left:631.0px;top:320.4px;color:#56639f">Публічне благо (англійською в дужках)</div><div class="a cell" style="left:923.5px;top:320.4px;color:#56639f">Що фактично оплачується з податків</div><div class="a cell" style="left:339.0px;top:345.0px;color:#56639f">Загальнодержавні податки (ПДВ, ПДФО,<br>податок на прибуток тощо)</div><div class="a cell" style="left:631.0px;top:353.2px;color:#56639f">Оборона і безпека (<i>national defence, public safety</i>)</div><div class="a cell" style="left:923.5px;top:345.0px;color:#56639f">Армія, поліція, прикордонники, рятувальні<br>служби, техніка, інфраструктура безпеки</div><div class="a cell" style="left:339.0px;top:402.8px;color:#56639f">Загальнодержавні та місцеві податки</div><div class="a cell" style="left:631.0px;top:402.8px;color:#56639f">Освіта (<i>public education</i>)</div><div class="a cell" style="left:923.5px;top:386.4px;color:#56639f">Зарплати вчителів і викладачів, утримання шкіл<br>і університетів, підручники, шкільний<br>транспорт</div><div class="a cell" style="left:339.0px;top:456.4px;color:#56639f">Загальнодержавні й місцеві податки, соцвнески</div><div class="a cell" style="left:631.0px;top:456.4px;color:#56639f">Охорона здоров’я (<i>public healthcare</i>)</div><div class="a cell" style="left:923.5px;top:440.0px;color:#56639f">Лікарні, поліклініки, екстрена медична<br>допомога, частина програм страхування<br>здоров’я</div><div class="a cell" style="left:339.0px;top:502.1px;color:#56639f">Пальне, акцизи, частина загальнодержавних і<br>місцевих податків</div><div class="a cell" style="left:631.0px;top:502.1px;color:#56639f">Транспортна інфраструктура (<i>roads and</i><br><i>highways, public transport</i>)</div><div class="a cell" style="left:923.5px;top:493.9px;color:#56639f">Будівництво й ремонт доріг, мостів, вулична<br>інфраструктура, частково громадський<br>транспорт<u>gauthmath</u></div><div class="a cell" style="left:339.0px;top:555.5px;color:#56639f">Місцеві податки (майнові, туристичні, частка<br>ПДФО, ПДВ)</div><div class="a cell" style="left:631.0px;top:555.5px;color:#56639f">Місцеві парки та публічні простори (<i>parks,</i><br><i>public spaces</i>)</div><div class="a cell" style="left:923.5px;top:555.5px;color:#56639f">Створення й догляд за парками, скверами,<br>дитячими майданчиками, міським озелененням</div><div class="a cell" style="left:339.0px;top:609.0px;color:#56639f">Загальнодержавні й місцеві податки,<br>екоподатки</div><div class="a cell" style="left:631.0px;top:617.2px;color:#56639f">Охорона довкілля (<i>environmental protection</i>)</div><div class="a cell" style="left:923.5px;top:600.8px;color:#56639f">Природоохоронні програми, <u>нацпарки</u>,<br>моніторинг довкілля, управління відходами,<br><u>екоінфраструктура</u></div><div class="a cell" style="left:339.0px;top:670.7px;color:#56639f">Податки + соцвнески</div><div class="a cell" style="left:631.0px;top:662.5px;color:#56639f">Соціальний захист (<i>social security, welfare</i><br><i>programs</i>)</div><div class="a cell" style="left:923.5px;top:654.3px;color:#56639f">Пенсії, допомога з безробіття, підтримка<br>вразливих груп, частина програм<br>соцстрахування</div><div class="t" style="left:1131.40px;top:693.91px;font-size:18.5px;color:#2c5b9f;font-family:'Liberation Serif',serif;transform:scaleX(0.9941);transform-origin:0 0;-webkit-text-stroke:0.4px #2c5b9f;">nubip.edu.ua</div></div></div>
<div class="a" style="left:44.5px;top:160px;width:152.5px;height:17px;background:#fff;border-radius:0 0 3px 3px;box-shadow:0 0.5px 1.5px rgba(0,0,0,0.15)"></div>
<div class="a" style="left:180px;top:172px;width:14px;height:1.5px;background:#9db0d8"></div>
<div class="a" style="left:42px;top:189px;width:158px;height:91px;border:2.6px solid #a8493a;border-radius:6px"></div>
<div class="t" style="left:26.00px;top:191.49px;font-size:11px;color:#2a2a2a;transform:scaleX(0.8990);transform-origin:0 0;">19</div>
<div class="a" style="left:44.5px;top:192px;width:152.5px;height:85px;background:#fff;overflow:hidden;border-radius:3px;box-shadow:0 0.5px 1.5px rgba(0,0,0,0.15)"><div class="a" style="left:0;top:0;width:950px;height:534px;transform:scale(0.1605);transform-origin:0 0"><div class="a" style="left:-301px;top:-197px;width:1600px;height:900px"><svg style="left:309px;top:202px" width="43" height="57" viewBox="0 0 43 57"><path d="M0.5 0.5 L42.5 0.5 L42.5 33 C42.5 45 33 51 21.5 56.5 C10 51 0.5 45 0.5 33 Z" fill="#7c9a50"/><path d="M1.5 1.5 L41.5 1.5 L41.5 33 C41.5 44.5 32.5 50 21.5 55.3 C10.5 50 1.5 44.5 1.5 33 Z" fill="#cde276"/><path d="M4 4 L39 4 L39 33 C39 43 31 48 21.5 52.5 C12 48 4 43 4 33 Z" fill="#2e5fb6"/><ellipse cx="21.5" cy="14" rx="2.6" ry="5.5" fill="#b6cf6c"/><ellipse cx="14" cy="18" rx="2.4" ry="5.5" transform="rotate(-38 14 18)" fill="#b6cf6c"/><ellipse cx="29" cy="18" rx="2.4" ry="5.5" transform="rotate(38 29 18)" fill="#b6cf6c"/><path d="M21.5 19 L21.5 30 M17 22 L21 30 M26 22 L22 30 M17 35 L21.5 28.5 L26 35 M19.5 35 L21.5 29 L23.5 35" stroke="#b6cf6c" stroke-width="1.3" fill="none"/><text x="21.5" y="43.5" font-size="8" font-weight="bold" text-anchor="middle" fill="#d2e57a" font-family="Liberation Sans">NUBIP</text><rect x="18" y="46.5" width="7" height="1.5" fill="#a8c070"/></svg><div class="t" style="left:367.50px;top:207.64px;font-size:14.6px;color:#2f62ae;font-weight:bold;transform:scaleX(1.0090);transform-origin:0 0;">NATIONAL UNIVERSITY OF LIFE AND</div><div class="t" style="left:367.50px;top:225.14px;font-size:14.6px;color:#2f62ae;font-weight:bold;transform:scaleX(1.0097);transform-origin:0 0;">ENVIRONMENTAL SCIENCES OF UKRAINE</div><div class="t" style="left:364.00px;top:270.27px;font-size:34px;color:#2c5b9f;font-weight:bold;font-family:'Liberation Serif',serif;transform:scaleX(1.0022);transform-origin:0 0;">Публічні блага що фінансуються за рахунок податків</div><div class="a" style="left:337px;top:318px;width:876px;height:20.5px;background:#efeff0"></div><div class="a" style="left:337px;top:318.2px;width:877px;height:1px;background:#e7e7ea"></div><div class="a" style="left:337px;top:338.5px;width:877px;height:1px;background:#e7e7ea"></div><div class="a" style="left:337px;top:384.2px;width:877px;height:1px;background:#e7e7ea"></div><div class="a" style="left:337px;top:437.8px;width:877px;height:1px;background:#e7e7ea"></div><div class="a" style="left:337px;top:491.5px;width:877px;height:1px;background:#e7e7ea"></div><div class="a" style="left:337px;top:545.5px;width:877px;height:1px;background:#e7e7ea"></div><div class="a" style="left:337px;top:598.3px;width:877px;height:1px;background:#e7e7ea"></div><div class="a" style="left:337px;top:652.5px;width:877px;height:1px;background:#e7e7ea"></div><div class="a" style="left:337px;top:705.3px;width:877px;height:1px;background:#e7e7ea"></div><div class="a" style="left:337.0px;top:318.2px;width:1px;height:387px;background:#e7e7ea"></div><div class="a" style="left:629.0px;top:318.2px;width:1px;height:387px;background:#e7e7ea"></div><div class="a" style="left:921.5px;top:318.2px;width:1px;height:387px;background:#e7e7ea"></div><div class="a" style="left:1213.5px;top:318.2px;width:1px;height:387px;background:#e7e7ea"></div><div class="a cell" style="left:339.0px;top:320.4px;color:#56639f">Джерело/рівень податків</div><div class="a cell" style="left:631.0px;top:320.4px;color:#56639f">Публічне благо (англійською в дужках)</div><div class="a cell" style="left:923.5px;top:320.4px;color:#56639f">Що фактично оплачується з податків</div><div class="a cell" style="left:339.0px;top:345.0px;color:#56639f">Загальнодержавні податки (ПДВ, ПДФО,<br>податок на прибуток тощо)</div><div class="a cell" style="left:631.0px;top:353.2px;color:#56639f">Оборона і безпека (<i>national defence, public safety</i>)</div><div class="a cell" style="left:923.5px;top:345.0px;color:#56639f">Армія, поліція, прикордонники, рятувальні<br>служби, техніка, інфраструктура безпеки</div><div class="a cell" style="left:339.0px;top:402.8px;color:#56639f">Загальнодержавні та місцеві податки</div><div class="a cell" style="left:631.0px;top:402.8px;color:#56639f">Освіта (<i>public education</i>)</div><div class="a cell" style="left:923.5px;top:386.4px;color:#56639f">Зарплати вчителів і викладачів, утримання шкіл<br>і університетів, підручники, шкільний<br>транспорт</div><div class="a cell" style="left:339.0px;top:456.4px;color:#56639f">Загальнодержавні й місцеві податки, соцвнески</div><div class="a cell" style="left:631.0px;top:456.4px;color:#56639f">Охорона здоров’я (<i>public healthcare</i>)</div><div class="a cell" style="left:923.5px;top:440.0px;color:#56639f">Лікарні, поліклініки, екстрена медична<br>допомога, частина програм страхування<br>здоров’я</div><div class="a cell" style="left:339.0px;top:502.1px;color:#56639f">Пальне, акцизи, частина загальнодержавних і<br>місцевих податків</div><div class="a cell" style="left:631.0px;top:502.1px;color:#56639f">Транспортна інфраструктура (<i>roads and</i><br><i>highways, public transport</i>)</div><div class="a cell" style="left:923.5px;top:493.9px;color:#56639f">Будівництво й ремонт доріг, мостів, вулична<br>інфраструктура, частково громадський<br>транспорт<u>gauthmath</u></div><div class="a cell" style="left:339.0px;top:555.5px;color:#56639f">Місцеві податки (майнові, туристичні, частка<br>ПДФО, ПДВ)</div><div class="a cell" style="left:631.0px;top:555.5px;color:#56639f">Місцеві парки та публічні простори (<i>parks,</i><br><i>public spaces</i>)</div><div class="a cell" style="left:923.5px;top:555.5px;color:#56639f">Створення й догляд за парками, скверами,<br>дитячими майданчиками, міським озелененням</div><div class="a cell" style="left:339.0px;top:609.0px;color:#56639f">Загальнодержавні й місцеві податки,<br>екоподатки</div><div class="a cell" style="left:631.0px;top:617.2px;color:#56639f">Охорона довкілля (<i>environmental protection</i>)</div><div class="a cell" style="left:923.5px;top:600.8px;color:#56639f">Природоохоронні програми, <u>нацпарки</u>,<br>моніторинг довкілля, управління відходами,<br><u>екоінфраструктура</u></div><div class="a cell" style="left:339.0px;top:670.7px;color:#56639f">Податки + соцвнески</div><div class="a cell" style="left:631.0px;top:662.5px;color:#56639f">Соціальний захист (<i>social security, welfare</i><br><i>programs</i>)</div><div class="a cell" style="left:923.5px;top:654.3px;color:#56639f">Пенсії, допомога з безробіття, підтримка<br>вразливих груп, частина програм<br>соцстрахування</div><div class="t" style="left:1131.40px;top:693.91px;font-size:18.5px;color:#2c5b9f;font-family:'Liberation Serif',serif;transform:scaleX(0.9941);transform-origin:0 0;-webkit-text-stroke:0.4px #2c5b9f;">nubip.edu.ua</div></div></div></div>
<div class="t" style="left:26.00px;top:291.49px;font-size:11px;color:#2a2a2a;transform:scaleX(0.8990);transform-origin:0 0;">20</div>
<div class="a" style="left:44.5px;top:292px;width:152.5px;height:85px;background:#fff;overflow:hidden;border-radius:3px;box-shadow:0 0.5px 1.5px rgba(0,0,0,0.15)"><div class="a" style="left:0;top:0;width:950px;height:534px;transform:scale(0.1605);transform-origin:0 0"><div class="a" style="left:-301px;top:-197px;width:1600px;height:900px"><svg style="left:309px;top:202px" width="43" height="57" viewBox="0 0 43 57"><path d="M0.5 0.5 L42.5 0.5 L42.5 33 C42.5 45 33 51 21.5 56.5 C10 51 0.5 45 0.5 33 Z" fill="#7c9a50"/><path d="M1.5 1.5 L41.5 1.5 L41.5 33 C41.5 44.5 32.5 50 21.5 55.3 C10.5 50 1.5 44.5 1.5 33 Z" fill="#cde276"/><path d="M4 4 L39 4 L39 33 C39 43 31 48 21.5 52.5 C12 48 4 43 4 33 Z" fill="#2e5fb6"/><ellipse cx="21.5" cy="14" rx="2.6" ry="5.5" fill="#b6cf6c"/><ellipse cx="14" cy="18" rx="2.4" ry="5.5" transform="rotate(-38 14 18)" fill="#b6cf6c"/><ellipse cx="29" cy="18" rx="2.4" ry="5.5" transform="rotate(38 29 18)" fill="#b6cf6c"/><path d="M21.5 19 L21.5 30 M17 22 L21 30 M26 22 L22 30 M17 35 L21.5 28.5 L26 35 M19.5 35 L21.5 29 L23.5 35" stroke="#b6cf6c" stroke-width="1.3" fill="none"/><text x="21.5" y="43.5" font-size="8" font-weight="bold" text-anchor="middle" fill="#d2e57a" font-family="Liberation Sans">NUBIP</text><rect x="18" y="46.5" width="7" height="1.5" fill="#a8c070"/></svg><div class="t" style="left:367.50px;top:207.64px;font-size:14.6px;color:#2f62ae;font-weight:bold;transform:scaleX(1.0090);transform-origin:0 0;">NATIONAL UNIVERSITY OF LIFE AND</div><div class="t" style="left:367.50px;top:225.14px;font-size:14.6px;color:#2f62ae;font-weight:bold;transform:scaleX(1.0097);transform-origin:0 0;">ENVIRONMENTAL SCIENCES OF UKRAINE</div><div class="t" style="left:364.00px;top:270.27px;font-size:34px;color:#2c5b9f;font-weight:bold;font-family:'Liberation Serif',serif;transform:scaleX(1.0022);transform-origin:0 0;">Публічні блага що фінансуються за рахунок податків</div><div class="a" style="left:337px;top:318px;width:876px;height:20.5px;background:#efeff0"></div><div class="a" style="left:337px;top:318.2px;width:877px;height:1px;background:#e7e7ea"></div><div class="a" style="left:337px;top:338.5px;width:877px;height:1px;background:#e7e7ea"></div><div class="a" style="left:337px;top:384.2px;width:877px;height:1px;background:#e7e7ea"></div><div class="a" style="left:337px;top:437.8px;width:877px;height:1px;background:#e7e7ea"></div><div class="a" style="left:337px;top:491.5px;width:877px;height:1px;background:#e7e7ea"></div><div class="a" style="left:337px;top:545.5px;width:877px;height:1px;background:#e7e7ea"></div><div class="a" style="left:337px;top:598.3px;width:877px;height:1px;background:#e7e7ea"></div><div class="a" style="left:337px;top:652.5px;width:877px;height:1px;background:#e7e7ea"></div><div class="a" style="left:337px;top:705.3px;width:877px;height:1px;background:#e7e7ea"></div><div class="a" style="left:337.0px;top:318.2px;width:1px;height:387px;background:#e7e7ea"></div><div class="a" style="left:629.0px;top:318.2px;width:1px;height:387px;background:#e7e7ea"></div><div class="a" style="left:921.5px;top:318.2px;width:1px;height:387px;background:#e7e7ea"></div><div class="a" style="left:1213.5px;top:318.2px;width:1px;height:387px;background:#e7e7ea"></div><div class="a cell" style="left:339.0px;top:320.4px;color:#56639f">Джерело/рівень податків</div><div class="a cell" style="left:631.0px;top:320.4px;color:#56639f">Публічне благо (англійською в дужках)</div><div class="a cell" style="left:923.5px;top:320.4px;color:#56639f">Що фактично оплачується з податків</div><div class="a cell" style="left:339.0px;top:345.0px;color:#56639f">Загальнодержавні податки (ПДВ, ПДФО,<br>податок на прибуток тощо)</div><div class="a cell" style="left:631.0px;top:353.2px;color:#56639f">Оборона і безпека (<i>national defence, public safety</i>)</div><div class="a cell" style="left:923.5px;top:345.0px;color:#56639f">Армія, поліція, прикордонники, рятувальні<br>служби, техніка, інфраструктура безпеки</div><div class="a cell" style="left:339.0px;top:402.8px;color:#56639f">Загальнодержавні та місцеві податки</div><div class="a cell" style="left:631.0px;top:402.8px;color:#56639f">Освіта (<i>public education</i>)</div><div class="a cell" style="left:923.5px;top:386.4px;color:#56639f">Зарплати вчителів і викладачів, утримання шкіл<br>і університетів, підручники, шкільний<br>транспорт</div><div class="a cell" style="left:339.0px;top:456.4px;color:#56639f">Загальнодержавні й місцеві податки, соцвнески</div><div class="a cell" style="left:631.0px;top:456.4px;color:#56639f">Охорона здоров’я (<i>public healthcare</i>)</div><div class="a cell" style="left:923.5px;top:440.0px;color:#56639f">Лікарні, поліклініки, екстрена медична<br>допомога, частина програм страхування<br>здоров’я</div><div class="a cell" style="left:339.0px;top:502.1px;color:#56639f">Пальне, акцизи, частина загальнодержавних і<br>місцевих податків</div><div class="a cell" style="left:631.0px;top:502.1px;color:#56639f">Транспортна інфраструктура (<i>roads and</i><br><i>highways, public transport</i>)</div><div class="a cell" style="left:923.5px;top:493.9px;color:#56639f">Будівництво й ремонт доріг, мостів, вулична<br>інфраструктура, частково громадський<br>транспорт<u>gauthmath</u></div><div class="a cell" style="left:339.0px;top:555.5px;color:#56639f">Місцеві податки (майнові, туристичні, частка<br>ПДФО, ПДВ)</div><div class="a cell" style="left:631.0px;top:555.5px;color:#56639f">Місцеві парки та публічні простори (<i>parks,</i><br><i>public spaces</i>)</div><div class="a cell" style="left:923.5px;top:555.5px;color:#56639f">Створення й догляд за парками, скверами,<br>дитячими майданчиками, міським озелененням</div><div class="a cell" style="left:339.0px;top:609.0px;color:#56639f">Загальнодержавні й місцеві податки,<br>екоподатки</div><div class="a cell" style="left:631.0px;top:617.2px;color:#56639f">Охорона довкілля (<i>environmental protection</i>)</div><div class="a cell" style="left:923.5px;top:600.8px;color:#56639f">Природоохоронні програми, <u>нацпарки</u>,<br>моніторинг довкілля, управління відходами,<br><u>екоінфраструктура</u></div><div class="a cell" style="left:339.0px;top:670.7px;color:#56639f">Податки + соцвнески</div><div class="a cell" style="left:631.0px;top:662.5px;color:#56639f">Соціальний захист (<i>social security, welfare</i><br><i>programs</i>)</div><div class="a cell" style="left:923.5px;top:654.3px;color:#56639f">Пенсії, допомога з безробіття, підтримка<br>вразливих груп, частина програм<br>соцстрахування</div><div class="t" style="left:1131.40px;top:693.91px;font-size:18.5px;color:#2c5b9f;font-family:'Liberation Serif',serif;transform:scaleX(0.9941);transform-origin:0 0;-webkit-text-stroke:0.4px #2c5b9f;">nubip.edu.ua</div></div></div></div>
<div class="t" style="left:26.00px;top:391.49px;font-size:11px;color:#2a2a2a;transform:scaleX(0.8990);transform-origin:0 0;">21</div>
<div class="a" style="left:44.5px;top:392px;width:152.5px;height:85px;background:#fff;overflow:hidden;border-radius:3px;box-shadow:0 0.5px 1.5px rgba(0,0,0,0.15)"><div class="a" style="left:0;top:0;width:950px;height:534px;transform:scale(0.1605);transform-origin:0 0"><svg style="left:8px;top:5px" width="44" height="57" viewBox="0 0 44 57"><path d="M1 1 L43 1 L43 33 C43 46 32 52 22 56 C12 52 1 46 1 33 Z" fill="#a9c07a"/><path d="M3.5 3.5 L40.5 3.5 L40.5 33 C40.5 44.5 31 50 22 53.5 C13 50 3.5 44.5 3.5 33 Z" fill="#3a6a7a"/></svg><div class="t" style="left:66px;top:8px;font-size:14.6px;font-weight:bold;color:#4a6aa0;-webkit-text-stroke:1.5px #4a6aa0">NATIONAL UNIVERSITY OF LIFE AND</div><div class="t" style="left:66px;top:26px;font-size:14.6px;font-weight:bold;color:#3a4a6a;-webkit-text-stroke:1.5px #3a4a6a">ENVIRONMENTAL SCIENCES OF UKRAINE</div><div class="t" style="left:0;top:50px;width:950px;text-align:center;font-family:'Liberation Serif',serif;font-weight:bold;font-size:34px;line-height:40px;color:#34446e">Публічні блага що фінансуються за рахунок платежів за<br>екосистемні послуги</div><div class="t" style="left:30px;top:158px;font-family:'Liberation Serif',serif;font-size:15px;font-weight:bold;color:#2e3558;-webkit-text-stroke:1px #2e3558">природоохоронні інфраструктура зелені влади</div><div class="t" style="left:30px;top:181px;font-family:'Liberation Serif',serif;font-size:15px;color:#5f6db0;-webkit-text-stroke:1.1px #7a88c4">біорізноманіття якість повітря громади парки відходами парки відходами водойми моніторинг чисте викиди фінансування клімат влади</div><div class="t" style="left:30px;top:204px;font-family:'Liberation Serif',serif;font-size:15px;color:#5f6db0;-webkit-text-stroke:1.1px #7a88c4">програми викиди насадження влади програми відходами контроль органи місцеві зелені водойми насадження платежі послуги податки</div><div class="t" style="left:30px;top:227px;font-family:'Liberation Serif',serif;font-size:15px;color:#5f6db0;-webkit-text-stroke:1.1px #7a88c4">зелені викиди довкілля повітря держава повітря бюджет місцеві клімат забруднення забруднення платежі парки екосистемні екосистемні</div><div class="t" style="left:30px;top:250px;font-family:'Liberation Serif',serif;font-size:15px;color:#5f6db0;-webkit-text-stroke:1.1px #7a88c4"><b style="color:#3a4170;-webkit-text-stroke:1.1px #3a4170">якість контроль фінансування</b> влади інфраструктура парки повітря місцеві</div><div class="t" style="left:30px;top:273px;font-family:'Liberation Serif',serif;font-size:15px;color:#5f6db0;-webkit-text-stroke:1.1px #7a88c4">ліси місцеві повітря місцеві органи клімат клімат забруднення чисте зелені екосистемні громади відновлення викиди біорізноманіття</div><div class="t" style="left:30px;top:296px;font-family:'Liberation Serif',serif;font-size:15px;color:#5f6db0;-webkit-text-stroke:1.1px #7a88c4">відновлення управління фінансування довкілля послуги контроль фінансування міські громади ліси клімат повітря інфраструктура</div><div class="t" style="left:30px;top:319px;font-family:'Liberation Serif',serif;font-size:15px;color:#5f6db0;-webkit-text-stroke:1.1px #7a88c4">чисте води контроль громади відновлення викиди викиди контроль клімат послуги міські бюджет чисте фінансування громади</div><div class="t" style="left:30px;top:342px;font-family:'Liberation Serif',serif;font-size:15px;color:#5f6db0;-webkit-text-stroke:1.1px #7a88c4">бюджет якість збереження парки</div><div class="t" style="left:850px;top:505px;font-family:'Liberation Serif',serif;font-size:18px;color:#2c4a7f">nubip.edu.ua</div></div></div>
<div class="t" style="left:26.00px;top:490.49px;font-size:11px;color:#2a2a2a;transform:scaleX(0.8990);transform-origin:0 0;">22</div>
<div class="a" style="left:44.5px;top:491px;width:152.5px;height:85px;background:#fff;overflow:hidden;border-radius:3px;box-shadow:0 0.5px 1.5px rgba(0,0,0,0.15)"><div class="a" style="left:0;top:0;width:950px;height:534px;transform:scale(0.1605);transform-origin:0 0"><svg style="left:8px;top:5px" width="44" height="57" viewBox="0 0 44 57"><path d="M1 1 L43 1 L43 33 C43 46 32 52 22 56 C12 52 1 46 1 33 Z" fill="#a9c07a"/><path d="M3.5 3.5 L40.5 3.5 L40.5 33 C40.5 44.5 31 50 22 53.5 C13 50 3.5 44.5 3.5 33 Z" fill="#3a6a7a"/></svg><div class="t" style="left:66px;top:8px;font-size:14.6px;font-weight:bold;color:#4a6aa0;-webkit-text-stroke:1.5px #4a6aa0">NATIONAL UNIVERSITY OF LIFE AND</div><div class="t" style="left:66px;top:26px;font-size:14.6px;font-weight:bold;color:#3a4a6a;-webkit-text-stroke:1.5px #3a4a6a">ENVIRONMENTAL SCIENCES OF UKRAINE</div><div class="t" style="left:0;top:50px;width:950px;text-align:center;font-family:'Liberation Serif',serif;font-weight:bold;font-size:34px;line-height:40px;color:#34446e">Публічні блага що фінансуються за рахунок платежів за<br>екосистемні послуги</div><div class="t" style="left:22px;top:148px;font-family:'Liberation Serif',serif;font-size:15px;font-weight:bold;color:#2e3558;-webkit-text-stroke:1px #2e3558">довкілля міські відновлення моніторинг викиди</div><div class="t" style="left:22px;top:171px;font-family:'Liberation Serif',serif;font-size:15px;color:#5f6db0;-webkit-text-stroke:1.1px #7a88c4">водойми держава ліси якість місцеві чисте міські контроль забруднення бюджет місцеві забруднення місцеві забруднення</div><div class="t" style="left:22px;top:194px;font-family:'Liberation Serif',serif;font-size:15px;color:#5f6db0;-webkit-text-stroke:1.1px #7a88c4">послуги зелені контроль ліси парки зелені парки контроль громади управління громади відновлення парки водойми</div><div class="t" style="left:22px;top:217px;font-family:'Liberation Serif',serif;font-size:15px;color:#5f6db0;-webkit-text-stroke:1.1px #7a88c4">моніторинг контроль природоохоронні територій повітря повітря управління ліси міські відновлення викиди платежі викиди</div><div class="t" style="left:22px;top:240px;font-family:'Liberation Serif',serif;font-size:15px;color:#5f6db0;-webkit-text-stroke:1.1px #7a88c4">повітря клімат громади води довкілля зелені парки місцеві біорізноманіття інфраструктура повітря водойми податки</div><div class="t" style="left:22px;top:263px;font-family:'Liberation Serif',serif;font-size:15px;color:#5f6db0;-webkit-text-stroke:1.1px #7a88c4">відходами міські викиди охорона</div><div class="t" style="left:22px;top:286px;font-family:'Liberation Serif',serif;font-size:15px;color:#5f6db0;-webkit-text-stroke:1.1px #7a88c4"><b style="color:#3a4170;-webkit-text-stroke:1.1px #3a4170">органи держава ліси відновлення платежі контроль</b> міські відходами громади водойми податки якість збереження чисте</div><div class="t" style="left:22px;top:309px;font-family:'Liberation Serif',serif;font-size:15px;color:#5f6db0;-webkit-text-stroke:1.1px #7a88c4">громади довкілля контроль податки моніторинг територій ліси клімат екосистемні управління місцеві зелені програми</div><div class="t" style="left:22px;top:332px;font-family:'Liberation Serif',serif;font-size:15px;color:#5f6db0;-webkit-text-stroke:1.1px #7a88c4">міські фінансування послуги фінансування влади повітря водойми фінансування зелені міські послуги влади охорона відходами</div><div class="t" style="left:22px;top:355px;font-family:'Liberation Serif',serif;font-size:15px;color:#5f6db0;-webkit-text-stroke:1.1px #7a88c4">клімат влади місцеві податки ліси чисте біорізноманіття податки</div><div class="t" style="left:850px;top:505px;font-family:'Liberation Serif',serif;font-size:18px;color:#2c4a7f">nubip.edu.ua</div></div></div>
<div class="t" style="left:26.00px;top:590.49px;font-size:11px;color:#2a2a2a;transform:scaleX(0.8990);transform-origin:0 0;">23</div>
<div class="a" style="left:44.5px;top:591px;width:152.5px;height:85px;background:#fff;overflow:hidden;border-radius:3px;box-shadow:0 0.5px 1.5px rgba(0,0,0,0.15)"><div class="a" style="left:0;top:0;width:950px;height:534px;transform:scale(0.1605);transform-origin:0 0"><svg style="left:8px;top:5px" width="44" height="57" viewBox="0 0 44 57"><path d="M1 1 L43 1 L43 33 C43 46 32 52 22 56 C12 52 1 46 1 33 Z" fill="#a9c07a"/><path d="M3.5 3.5 L40.5 3.5 L40.5 33 C40.5 44.5 31 50 22 53.5 C13 50 3.5 44.5 3.5 33 Z" fill="#3a6a7a"/></svg><div class="t" style="left:66px;top:8px;font-size:14.6px;font-weight:bold;color:#5a78b8;-webkit-text-stroke:1.5px #5a78b8">NATIONAL UNIVERSITY OF LIFE AND</div><div class="t" style="left:66px;top:26px;font-size:14.6px;font-weight:bold;color:#3a4a6a;-webkit-text-stroke:1.5px #3a4a6a">ENVIRONMENTAL SCIENCES OF UKRAINE</div><div class="t" style="left:0;top:50px;width:950px;text-align:center;font-family:'Liberation Serif',serif;font-weight:bold;font-size:34px;line-height:40px;color:#7a7f9c">Публічні блага що фінансуються за рахунок платежів за<br>екосистемні послуги</div><div class="t" style="left:30px;top:131px;font-family:'Liberation Serif',serif;font-size:15px;font-weight:bold;color:#2e3558;-webkit-text-stroke:1px #2e3558">інфраструктура місцеві</div><div class="t" style="left:30px;top:154px;font-family:'Liberation Serif',serif;font-size:15px;color:#5f6db0;-webkit-text-stroke:1.1px #7a88c4">програми податки органи фінансування води викиди місцеві контроль міські чисте моніторинг природоохоронні податки</div><div class="t" style="left:30px;top:177px;font-family:'Liberation Serif',serif;font-size:15px;color:#5f6db0;-webkit-text-stroke:1.1px #7a88c4">клімат повітря охорона природоохоронні відновлення платежі насадження забруднення довкілля ліси відходами міські моніторинг</div><div class="t" style="left:30px;top:200px;font-family:'Liberation Serif',serif;font-size:15px;color:#5f6db0;-webkit-text-stroke:1.1px #7a88c4">міські повітря громади зелені територій програми відходами парки фінансування якість відходами забруднення</div><div class="t" style="left:30px;top:223px;font-family:'Liberation Serif',serif;font-size:15px;color:#5f6db0;-webkit-text-stroke:1.1px #7a88c4">управління охорона влади забруднення повітря якість клімат держава податки охорона природоохоронні влади</div><div class="t" style="left:30px;top:246px;font-family:'Liberation Serif',serif;font-size:15px;color:#5f6db0;-webkit-text-stroke:1.1px #7a88c4">якість відновлення громади органи повітря зелені моніторинг насадження контроль</div><div class="t" style="left:30px;top:287px;font-family:'Liberation Serif',serif;font-size:15px;font-weight:bold;color:#2e3558;-webkit-text-stroke:1px #2e3558">природоохоронні</div><div class="t" style="left:30px;top:310px;font-family:'Liberation Serif',serif;font-size:15px;color:#5f6db0;-webkit-text-stroke:1.1px #7a88c4"><b style="color:#3a4170;-webkit-text-stroke:1.1px #3a4170">органи чисте зелені природоохоронні якість охорона</b> відходами влади громади насадження бюджет охорона</div><div class="t" style="left:30px;top:333px;font-family:'Liberation Serif',serif;font-size:15px;color:#5f6db0;-webkit-text-stroke:1.1px #7a88c4">громади біорізноманіття бюджет контроль якість податки моніторинг відновлення держава громади контроль</div><div class="t" style="left:30px;top:356px;font-family:'Liberation Serif',serif;font-size:15px;color:#5f6db0;-webkit-text-stroke:1.1px #7a88c4">програми викиди управління держава відновлення парки послуги контроль відходами послуги довкілля платежі територій</div><div class="t" style="left:30px;top:379px;font-family:'Liberation Serif',serif;font-size:15px;color:#5f6db0;-webkit-text-stroke:1.1px #7a88c4">ліси територій природоохоронні моніторинг охорона екосистемні водойми водойми довкілля зелені зелені охорона платежі</div><div class="t" style="left:30px;top:402px;font-family:'Liberation Serif',serif;font-size:15px;color:#5f6db0;-webkit-text-stroke:1.1px #7a88c4">інфраструктура екосистемні моніторинг громади</div><div class="t" style="left:850px;top:505px;font-family:'Liberation Serif',serif;font-size:18px;color:#2c4a7f">nubip.edu.ua</div></div></div>
<div class="t" style="left:26.00px;top:689.99px;font-size:11px;color:#2a2a2a;transform:scaleX(0.8990);transform-origin:0 0;">24</div>
<div class="a" style="left:44.5px;top:690.5px;width:152.5px;height:85px;background:#fff;overflow:hidden;border-radius:3px;box-shadow:0 0.5px 1.5px rgba(0,0,0,0.15)"><div class="t" style="left:13px;top:13px;font-size:5px;color:#8a93b8;font-family:'Liberation Serif',serif;font-style:italic">Дякую за увагу!</div><div class="t" style="left:11px;top:31px;font-size:5.6px;color:#3c4f92;font-family:'Liberation Serif',serif;-webkit-text-stroke:0.15px #3c4f92">Олександр ЛАБЕНКО,</div><div class="t" style="left:11px;top:38.5px;font-size:5.6px;color:#3c4f92;font-family:'Liberation Serif',serif;-webkit-text-stroke:0.15px #3c4f92">доцент кафедри фінансів</div><div class="t" style="left:11px;top:46px;font-size:5.6px;color:#3c4f92;font-family:'Liberation Serif',serif;-webkit-text-stroke:0.15px #3c4f92">labenko@nubip.edu.ua</div><div class="t" style="left:11px;top:73px;font-size:4px;color:#6070a8;font-family:'Liberation Serif',serif;">nubip.edu.ua</div><div class="a" style="left:111px;top:0;width:42px;height:85px;background:#2b5cb8"></div><div class="a" style="left:113px;top:2px;width:7px;height:9px;border:1px solid #9cbc86;border-radius:1px 1px 3.5px 3.5px;background:#3a66b2"></div><div class="a" style="left:129px;top:2px;width:7px;height:9px;border:1px solid #9cbc86;border-radius:1px 1px 3.5px 3.5px;background:#3a66b2"></div><div class="a" style="left:145px;top:2px;width:7px;height:9px;border:1px solid #9cbc86;border-radius:1px 1px 3.5px 3.5px;background:#3a66b2"></div><div class="a" style="left:121px;top:16px;width:7px;height:9px;border:1px solid #9cbc86;border-radius:1px 1px 3.5px 3.5px;background:#3a66b2"></div><div class="a" style="left:137px;top:16px;width:7px;height:9px;border:1px solid #9cbc86;border-radius:1px 1px 3.5px 3.5px;background:#3a66b2"></div><div class="a" style="left:113px;top:31px;width:7px;height:9px;border:1px solid #9cbc86;border-radius:1px 1px 3.5px 3.5px;background:#3a66b2"></div><div class="a" style="left:129px;top:31px;width:7px;height:9px;border:1px solid #9cbc86;border-radius:1px 1px 3.5px 3.5px;background:#3a66b2"></div><div class="a" style="left:145px;top:31px;width:7px;height:9px;border:1px solid #9cbc86;border-radius:1px 1px 3.5px 3.5px;background:#3a66b2"></div><div class="a" style="left:121px;top:45.5px;width:7px;height:9px;border:1px solid #9cbc86;border-radius:1px 1px 3.5px 3.5px;background:#3a66b2"></div><div class="a" style="left:137px;top:45.5px;width:7px;height:9px;border:1px solid #9cbc86;border-radius:1px 1px 3.5px 3.5px;background:#3a66b2"></div><div class="a" style="left:113px;top:61px;width:7px;height:9px;border:1px solid #9cbc86;border-radius:1px 1px 3.5px 3.5px;background:#3a66b2"></div><div class="a" style="left:129px;top:61px;width:7px;height:9px;border:1px solid #9cbc86;border-radius:1px 1px 3.5px 3.5px;background:#3a66b2"></div><div class="a" style="left:145px;top:61px;width:7px;height:9px;border:1px solid #9cbc86;border-radius:1px 1px 3.5px 3.5px;background:#3a66b2"></div><div class="a" style="left:121px;top:75px;width:7px;height:9px;border:1px solid #9cbc86;border-radius:1px 1px 3.5px 3.5px;background:#3a66b2"></div><div class="a" style="left:137px;top:75px;width:7px;height:9px;border:1px solid #9cbc86;border-radius:1px 1px 3.5px 3.5px;background:#3a66b2"></div></div>
<svg style="left:51px;top:334px" width="9" height="14"><path d="M0.5 0.5 L0.5 11 L3 8.5 L5 13 L6.5 12.3 L4.5 8 L8 8 Z" fill="#111" stroke="#fff" stroke-width="0.7"/></svg>
<div class="a" style="left:1336px;top:410px;width:4px;height:42px;background:#8b8f91;border-radius:1px"></div>
<div class="a" style="left:1389px;top:104px;width:168px;height:97px;border-radius:7px;overflow:hidden;background:#d2d2ce"><div class="a" style="left:-5px;top:-5px;width:178px;height:107px;background:linear-gradient(90deg,#cdcdc9 0%,#d9d9d5 12%,#d5d5d1 30%,#d2d2ce 50%,#d4d3cf 70%,#d8d6d1 85%,#d4d1cc 100%);filter:blur(2px)"></div><div class="a" style="left:10px;top:0px;width:30px;height:97px;background:#dcdcd8;filter:blur(6px)"></div><div class="a" style="left:18px;top:40px;width:16px;height:28px;background:#b8bec9;filter:blur(4px)"></div><div class="a" style="left:54px;top:37px;width:20px;height:12px;background:#a0a6b0;filter:blur(3px)"></div><div class="a" style="left:140px;top:-10px;width:20px;height:120px;background:#e3d6c6;filter:blur(4px);transform:rotate(-12deg)"></div><div class="a" style="left:92px;top:73px;width:68px;height:40px;background:#2d3246;border-radius:18px 22px 0 0;filter:blur(1.5px)"></div><div class="a" style="left:77px;top:24px;width:45px;height:52px;background:#c49a90;border-radius:46% 46% 44% 44%;filter:blur(1.5px)"></div><div class="a" style="left:78px;top:23px;width:43px;height:12px;background:#463e3c;border-radius:50% 50% 15% 15%;filter:blur(1.2px)"></div><div class="a" style="left:76px;top:30px;width:5px;height:14px;background:#4d4442;filter:blur(1.2px)"></div><div class="a" style="left:118px;top:30px;width:5px;height:16px;background:#4d4442;filter:blur(1.2px)"></div><div class="a" style="left:85px;top:47px;width:30px;height:4px;background:#957068;filter:blur(1.5px)"></div><div class="a" style="left:96px;top:56px;width:9px;height:12px;background:#d6aca2;filter:blur(2px)"></div></div>
<div class="a" style="left:1388px;top:104px;width:169px;height:96px;border:3px solid #3edb96;border-radius:8px"></div>
<div class="a" style="left:1392.5px;top:176.6px;width:119.5px;height:20px;background:rgba(44,44,46,0.8);border-radius:5px"></div>
<div class="t" style="left:1396.00px;top:181.12px;font-size:12.5px;color:#f0f0f0;transform:scaleX(1.0193);transform-origin:0 0;">Oleksandr Labenko</div>
<div class="a" style="left:1389px;top:200px;width:168px;height:92px;overflow:hidden;background:#e4e4e1"><div class="a" style="left:0;top:0;width:168px;height:92px;background:linear-gradient(90deg,#dfdfdc,#e7e7e4 50%,#e9e9e6)"></div><div class="a" style="left:80px;top:72px;width:66px;height:30px;background:#2a2a2e;border-radius:12px 18px 0 0;filter:blur(1px)"></div><div class="a" style="left:42px;top:-2px;width:70px;height:76px;background:#d2c497;border-radius:40% 45% 25% 25%;filter:blur(1.5px)"></div><div class="a" style="left:52px;top:18px;width:54px;height:56px;background:#d9b2a2;border-radius:40% 40% 48% 48%;filter:blur(1.5px)"></div><div class="a" style="left:50px;top:0px;width:58px;height:22px;background:#d8ca9e;border-radius:40% 50% 35% 35%;filter:blur(1.2px)"></div><div class="a" style="left:62px;top:37px;width:13px;height:4px;background:#8c7a72;filter:blur(1.2px)"></div><div class="a" style="left:84px;top:37px;width:13px;height:4px;background:#8c7a72;filter:blur(1.2px)"></div><div class="a" style="left:72px;top:60px;width:16px;height:3px;background:#b07a74;filter:blur(1px)"></div></div>
<div class="a" style="left:1392.5px;top:270.4px;width:122px;height:20px;background:rgba(44,44,46,0.8);border-radius:5px"></div>
<svg style="left:1396.5px;top:273.4px" width="14" height="14" viewBox="0 0 14 14"><rect x="4.5" y="1" width="5" height="8" rx="2.5" fill="#e8575a"/><path d="M2.5 6.5 C2.5 10 11.5 10 11.5 6.5 M7 10 L7 12.5 M4.5 12.5 L9.5 12.5" stroke="#e8575a" stroke-width="1.1" fill="none"/><path d="M1.5 13 L12.5 1.5" stroke="#e8575a" stroke-width="1.3"/></svg>
<div class="t" style="left:1414.50px;top:275.12px;font-size:12.5px;color:#f0f0f0;transform:scaleX(1.0517);transform-origin:0 0;">Лариса Олійник</div>
<div class="a" style="left:1435px;top:302px;width:75px;height:72px;background:#69a23a;border-radius:7px 7px 0 0"></div>
<div class="t" style="left:1460.00px;top:321.39px;font-size:39px;color:#fff;transform:scaleX(0.9610);transform-origin:0 0;">A</div>
<div class="a" style="left:1393px;top:364.4px;width:138px;height:20px;background:rgba(44,44,46,0.8);border-radius:5px"></div>
<svg style="left:1397px;top:367.4px" width="14" height="14" viewBox="0 0 14 14"><rect x="4.5" y="1" width="5" height="8" rx="2.5" fill="#e8575a"/><path d="M2.5 6.5 C2.5 10 11.5 10 11.5 6.5 M7 10 L7 12.5 M4.5 12.5 L9.5 12.5" stroke="#e8575a" stroke-width="1.1" fill="none"/><path d="M1.5 13 L12.5 1.5" stroke="#e8575a" stroke-width="1.3"/></svg>
<div class="t" style="left:1415.00px;top:369.12px;font-size:12.5px;color:#f0f0f0;transform:scaleX(1.0511);transform-origin:0 0;">Andrii Muzychenko</div>
<div class="a" style="left:1389px;top:387px;width:168px;height:94px;overflow:hidden;background:#dedbd7"><div class="a" style="left:0;top:0;width:168px;height:94px;background:linear-gradient(90deg,#d9d6d2,#dedbd7 40%,#e2e0dc 70%,#e6e5e3 80%,#eeeeee 88%,#f2f2f2)"></div><div class="a" style="left:142px;top:0;width:26px;height:80px;background:#f4f4f4;filter:blur(1.5px)"></div><div class="a" style="left:141px;top:0;width:2px;height:75px;background:#d6d6d6;filter:blur(0.5px)"></div><div class="a" style="left:126px;top:77px;width:42px;height:17px;background:#ececec;filter:blur(0.8px)"></div><div class="a" style="left:156px;top:61px;width:11px;height:13px;background:#3c3c3e;filter:blur(0.5px)"></div><div class="a" style="left:122px;top:82px;width:10px;height:12px;background:#7a4a3a;filter:blur(1px)"></div><div class="a" style="left:58px;top:66px;width:50px;height:30px;background:#dcd6cc;border-radius:14px 14px 0 0;filter:blur(1px)"></div><div class="a" style="left:50px;top:17px;width:52px;height:54px;background:#d9ceb0;border-radius:45% 45% 30% 30%;filter:blur(1.3px)"></div><div class="a" style="left:60px;top:27px;width:32px;height:41px;background:#dcb2a2;border-radius:42% 42% 48% 48%;filter:blur(1px)"></div><div class="a" style="left:58px;top:18px;width:38px;height:12px;background:#ddd3b6;border-radius:50% 50% 30% 30%;filter:blur(1px)"></div><div class="a" style="left:65px;top:42px;width:7px;height:2.5px;background:#9a7a72;filter:blur(0.8px)"></div><div class="a" style="left:80px;top:42px;width:7px;height:2.5px;background:#9a7a72;filter:blur(0.8px)"></div><div class="a" style="left:69px;top:56px;width:15px;height:3px;background:#c08078;filter:blur(0.8px)"></div></div>
<div class="a" style="left:1393px;top:457.8px;width:107px;height:20px;background:rgba(44,44,46,0.8);border-radius:5px"></div>
<svg style="left:1397px;top:460.8px" width="14" height="14" viewBox="0 0 14 14"><rect x="4.5" y="1" width="5" height="8" rx="2.5" fill="#e8575a"/><path d="M2.5 6.5 C2.5 10 11.5 10 11.5 6.5 M7 10 L7 12.5 M4.5 12.5 L9.5 12.5" stroke="#e8575a" stroke-width="1.1" fill="none"/><path d="M1.5 13 L12.5 1.5" stroke="#e8575a" stroke-width="1.3"/></svg>
<div class="t" style="left:1415.00px;top:462.52px;font-size:12.5px;color:#f0f0f0;transform:scaleX(1.0370);transform-origin:0 0;">Yuliia Nehoda</div>
<div class="a" style="left:1435.5px;top:490px;width:75px;height:62px;overflow:hidden;background:#fafafa;border-radius:7px 7px 0 0"><div class="a" style="left:-6px;top:50px;width:87px;height:24px;background:#77736f;border-radius:34px 34px 0 0;filter:blur(0.7px)"></div><div class="a" style="left:27px;top:42px;width:19px;height:12px;background:#d0a896;filter:blur(0.7px)"></div><div class="a" style="left:17px;top:12px;width:37px;height:38px;background:#d9b1a1;border-radius:42% 42% 50% 50%;filter:blur(0.8px)"></div><div class="a" style="left:13px;top:1px;width:46px;height:19px;background:#e5dabf;border-radius:50% 50% 30% 30%;filter:blur(0.8px)"></div><div class="a" style="left:13px;top:10px;width:7px;height:21px;background:#e5dabf;border-radius:40%;filter:blur(0.8px)"></div><div class="a" style="left:52px;top:10px;width:7px;height:21px;background:#e5dabf;border-radius:40%;filter:blur(0.8px)"></div><div class="a" style="left:24px;top:24px;width:8px;height:2.5px;background:#8f7268;filter:blur(0.6px)"></div><div class="a" style="left:40px;top:24px;width:8px;height:2.5px;background:#8f7268;filter:blur(0.6px)"></div><div class="a" style="left:29px;top:42px;width:14px;height:2.5px;background:#b67a74;filter:blur(0.6px)"></div></div>
<div class="a" style="left:1393px;top:552px;width:120px;height:20px;background:rgba(44,44,46,0.8);border-radius:5px"></div>
<svg style="left:1397px;top:555px" width="14" height="14" viewBox="0 0 14 14"><rect x="4.5" y="1" width="5" height="8" rx="2.5" fill="#e8575a"/><path d="M2.5 6.5 C2.5 10 11.5 10 11.5 6.5 M7 10 L7 12.5 M4.5 12.5 L9.5 12.5" stroke="#e8575a" stroke-width="1.1" fill="none"/><path d="M1.5 13 L12.5 1.5" stroke="#e8575a" stroke-width="1.3"/></svg>
<div class="t" style="left:1415.00px;top:556.72px;font-size:12.5px;color:#f0f0f0;transform:scaleX(1.0247);transform-origin:0 0;">Олена Лемішко</div>
<div class="a" style="left:1435.5px;top:584px;width:75px;height:62px;overflow:hidden;background:#e7e7eb;border-radius:7px 7px 0 0"><div class="a" style="left:-6px;top:48px;width:87px;height:24px;background:#232327;border-radius:34px 34px 0 0;filter:blur(0.7px)"></div><div class="a" style="left:30px;top:40px;width:14px;height:10px;background:#d9a080;filter:blur(0.7px)"></div><div class="a" style="left:24px;top:17px;width:26px;height:32px;background:#e0aa8c;border-radius:42% 42% 50% 50%;filter:blur(0.8px)"></div><div class="a" style="left:20px;top:1px;width:39px;height:22px;background:#d78650;border-radius:50% 50% 30% 40%;filter:blur(0.8px)"></div><div class="a" style="left:20px;top:12px;width:9px;height:18px;background:#d78650;border-radius:40%;filter:blur(0.8px)"></div><div class="a" style="left:44px;top:12px;width:15px;height:21px;background:#d5824c;border-radius:30% 40% 50% 30%;filter:blur(0.8px)"></div><div class="a" style="left:30px;top:39px;width:13px;height:2.5px;background:#b9685e;filter:blur(0.6px)"></div></div>
<div class="a" style="left:1393px;top:645.5px;width:116px;height:20px;background:rgba(44,44,46,0.8);border-radius:5px"></div>
<svg style="left:1397px;top:648.5px" width="14" height="14" viewBox="0 0 14 14"><rect x="4.5" y="1" width="5" height="8" rx="2.5" fill="#e8575a"/><path d="M2.5 6.5 C2.5 10 11.5 10 11.5 6.5 M7 10 L7 12.5 M4.5 12.5 L9.5 12.5" stroke="#e8575a" stroke-width="1.1" fill="none"/><path d="M1.5 13 L12.5 1.5" stroke="#e8575a" stroke-width="1.3"/></svg>
<div class="t" style="left:1415.00px;top:650.22px;font-size:12.5px;color:#f0f0f0;transform:scaleX(1.0188);transform-origin:0 0;">Inna Dolzhenko</div>
<div class="t" style="left:1415.40px;top:707.23px;font-size:16.5px;color:#fff;font-weight:bold;transform:scaleX(1.0945);transform-origin:0 0;">Джума Аліса</div>
<div class="a" style="left:1392.7px;top:738.5px;width:102px;height:20px;background:rgba(44,44,46,0.8);border-radius:5px"></div>
<svg style="left:1396.7px;top:741.5px" width="14" height="14" viewBox="0 0 14 14"><rect x="4.5" y="1" width="5" height="8" rx="2.5" fill="#e8575a"/><path d="M2.5 6.5 C2.5 10 11.5 10 11.5 6.5 M7 10 L7 12.5 M4.5 12.5 L9.5 12.5" stroke="#e8575a" stroke-width="1.1" fill="none"/><path d="M1.5 13 L12.5 1.5" stroke="#e8575a" stroke-width="1.3"/></svg>
<div class="t" style="left:1414.70px;top:743.22px;font-size:12.5px;color:#f0f0f0;transform:scaleX(1.0107);transform-origin:0 0;">Джума Аліса</div>
<div class="a" style="left:1434px;top:762px;width:77px;height:35px;background:#0f1011;border-radius:6px"></div>
<svg style="left:1465px;top:775px" width="15" height="9"><path d="M1 1 L7.5 7.5 L14 1" stroke="#c8c8d0" stroke-width="1.6" fill="none"/></svg>
<div class="a" style="left:0;top:806px;width:1600px;height:61px;background:#000"></div>
<svg style="left:46px;top:817px" width="22" height="26" viewBox="0 0 22 26"><rect x="7" y="1" width="8" height="14" rx="4" stroke="#eee" stroke-width="1.5" fill="none"/><path d="M3 11 C3 20 19 20 19 11 M11 18.5 L11 24 M6 24.5 L16 24.5" stroke="#eee" stroke-width="1.5" fill="none"/><path d="M1 25 L21 1.5" stroke="#e11d5f" stroke-width="2.2"/></svg>
<svg style="left:83px;top:827px" width="9" height="6"><path d="M1 5 L4.5 1.5 L8 5" stroke="#eee" stroke-width="1.5" fill="none"/></svg>
<div class="t" style="left:42.50px;top:849.18px;font-size:11.6px;color:#f2f2f2;font-weight:bold;transform:scaleX(0.9482);transform-origin:0 0;">Звук</div>
<svg style="left:139px;top:823px" width="26" height="15" viewBox="0 0 26 15"><rect x="1" y="1" width="16" height="13" rx="3" stroke="#eee" stroke-width="1.5" fill="none"/><path d="M17 6 L24.5 1.5 L24.5 13.5 L17 9" stroke="#eee" stroke-width="1.5" fill="none"/></svg>
<svg style="left:186px;top:827px" width="9" height="6"><path d="M1 5 L4.5 1.5 L8 5" stroke="#eee" stroke-width="1.5" fill="none"/></svg>
<div class="t" style="left:134.20px;top:849.18px;font-size:11.6px;color:#f2f2f2;font-weight:bold;transform:scaleX(0.9613);transform-origin:0 0;">Видео</div>
<svg style="left:498px;top:821px" width="21" height="19" viewBox="0 0 21 19"><circle cx="6" cy="4.5" r="3.5" stroke="#eee" stroke-width="1.5" fill="none"/><circle cx="15" cy="8" r="3" stroke="#eee" stroke-width="1.5" fill="none"/><path d="M1 17 C1 10 11 10 11 14" stroke="#eee" stroke-width="1.5" fill="none"/><path d="M9 18 C9 12.5 20 12.5 20 18 Z" stroke="#eee" stroke-width="1.5" fill="none"/></svg>
<div class="t" style="left:526.00px;top:823.61px;font-size:10.5px;color:#a0a0a0;font-weight:bold;transform:scaleX(0.9418);transform-origin:0 0;">15</div>
<svg style="left:560px;top:827px" width="9" height="6"><path d="M1 5 L4.5 1.5 L8 5" stroke="#eee" stroke-width="1.5" fill="none"/></svg>
<div class="t" style="left:477.90px;top:849.18px;font-size:11.6px;color:#f2f2f2;font-weight:bold;transform:scaleX(1.0166);transform-origin:0 0;">Участники</div>
<svg style="left:611px;top:818px" width="24" height="24" viewBox="0 0 24 24"><path d="M8 5 C9 1 23 1 23 8 C23 12 21 13 19 14" stroke="#eee" stroke-width="1.5" fill="none"/><path d="M10 5.5 C17 5.5 19 9 19 12.5 C19 17 15 19.5 10 19.5 C8.5 19.5 7 19 6 18.5 L2 22 L3 17 C1.5 15.5 1 14 1 12.5 C1 8.5 4 5.5 10 5.5 Z" stroke="#eee" stroke-width="1.5" fill="none"/><circle cx="6" cy="12.7" r="1.2" fill="#eee"/><circle cx="10" cy="12.7" r="1.2" fill="#eee"/><circle cx="14" cy="12.7" r="1.2" fill="#eee"/></svg>
<svg style="left:654px;top:827px" width="9" height="6"><path d="M1 5 L4.5 1.5 L8 5" stroke="#eee" stroke-width="1.5" fill="none"/></svg>
<div class="t" style="left:614.30px;top:849.18px;font-size:11.6px;color:#f2f2f2;font-weight:bold;transform:scaleX(0.8874);transform-origin:0 0;">Чат</div>
<svg style="left:708px;top:818px" width="21" height="25" viewBox="0 0 21 25"><path d="M5 12 L5 4 C5 2 8 2 8 4 L8 11 M8 11 L8 2.5 C8 0.5 11 0.5 11 2.5 L11 11 M11 11 L11 3 C11 1 14 1 14 3 L14 11 M14 11 L14 6 C14 4 17 4 17 6 L17 15 C17 21 14 24 10 24 C6 24 4 22 2.5 19 L1 14 C0.5 12 3 11 4 13 L5 15" stroke="#eee" stroke-width="1.5" fill="none" stroke-linejoin="round"/></svg>
<svg style="left:751px;top:827px" width="9" height="6"><path d="M1 5 L4.5 1.5 L8 5" stroke="#eee" stroke-width="1.5" fill="none"/></svg>
<div class="t" style="left:680.50px;top:849.18px;font-size:11.6px;color:#f2f2f2;font-weight:bold;transform:scaleX(1.0053);transform-origin:0 0;">Поднять руку</div>
<div class="a" style="left:806px;top:820px;width:26px;height:20px;background:#26d07c;border-radius:3px"></div>
<svg style="left:812px;top:823px" width="14" height="14"><path d="M7 1.5 L7 12.5 M2.5 6 L7 1.5 L11.5 6" stroke="#000" stroke-width="2.4" fill="none"/></svg>
<div class="t" style="left:785.55px;top:849.18px;font-size:11.6px;color:#f2f2f2;font-weight:bold;transform:scaleX(0.9724);transform-origin:0 0;">Поделиться</div>
<svg style="left:906px;top:817px" width="26" height="25" viewBox="0 0 26 25"><defs><linearGradient id="g1" x1="0" y1="0" x2="1" y2="1"><stop offset="0" stop-color="#a6e4f2"/><stop offset="1" stop-color="#eaf4f4"/></linearGradient></defs><path d="M10 6 C11 13 13 15 20 16 C13 17 11 19 10 25 C9 19 7 17 0 16 C7 15 9 13 10 6 Z" fill="url(#g1)"/><path d="M20 0 C20.5 3 21 3.5 24 4 C21 4.5 20.5 5 20 8 C19.5 5 19 4.5 16 4 C19 3.5 19.5 3 20 0 Z" fill="#dff0f4"/></svg>
<div class="t" style="left:880.20px;top:849.18px;font-size:11.6px;color:#f2f2f2;font-weight:bold;transform:scaleX(1.0049);transform-origin:0 0;">AI Companion</div>
<svg style="left:1051px;top:817px" width="26" height="26"><circle cx="13" cy="13" r="11.5" stroke="#eee" stroke-width="1.6" fill="none"/><circle cx="13" cy="7.5" r="1.4" fill="#eee"/><path d="M10.5 11 L13.5 11 L13.5 18.5 M10 18.5 L16.5 18.5" stroke="#eee" stroke-width="1.7" fill="none"/></svg>
<div class="t" style="left:977.25px;top:849.18px;font-size:11.6px;color:#f2f2f2;font-weight:bold;transform:scaleX(1.0393);transform-origin:0 0;">Информация о конференции</div>
<svg style="left:1202px;top:817px" width="26" height="26"><circle cx="13" cy="13" r="11.5" stroke="#eee" stroke-width="1.6" fill="none"/><circle cx="8" cy="13" r="1.5" fill="#eee"/><circle cx="13" cy="13" r="1.5" fill="#eee"/><circle cx="18" cy="13" r="1.5" fill="#eee"/></svg>
<div class="t" style="left:1169.00px;top:849.18px;font-size:11.6px;color:#f2f2f2;font-weight:bold;transform:scaleX(1.0052);transform-origin:0 0;">Дополнительно</div>
<svg style="left:1537px;top:816px" width="27" height="28" viewBox="0 0 27 28"><path d="M10 4 L24.5 1 L24.5 24 L17.5 26 Z M10 4 L17.5 6 L17.5 26" stroke="#e21f5e" stroke-width="1.5" fill="none"/><circle cx="6.5" cy="7.5" r="3" stroke="#fff" stroke-width="1.5" fill="#000"/><path d="M3 15 C3 11 10 11 11 14 L12 17 L10.5 18 L10 16 L9.5 20 L11.5 26 L9 26.5 L6.5 21 L4.5 26.5 L2 26 L4 19 L3 17 L1.5 17 Z" stroke="#fff" stroke-width="1.4" fill="#000" stroke-linejoin="round"/></svg>
<div class="t" style="left:1532.30px;top:849.18px;font-size:11.6px;color:#f2f2f2;font-weight:bold;transform:scaleX(0.9051);transform-origin:0 0;">Выйти</div>
<div class="a" style="left:0;top:867px;width:1600px;height:2px;background:#858b93"></div>
<div class="a" style="left:0;top:869px;width:1600px;height:31px;background:#1f2f3e"></div>
<svg style="left:10px;top:876px" width="17" height="17"><rect x="0" y="0" width="8" height="8" fill="#fff"/><rect x="9" y="0" width="8" height="8" fill="#fff"/><rect x="0" y="9" width="8" height="8" fill="#fff"/><rect x="9" y="9" width="8" height="8" fill="#fff"/></svg>
<div class="a" style="left:38px;top:869px;width:268px;height:31px;background:#eef0f2"></div>
<svg style="left:50px;top:875px" width="18" height="18"><circle cx="11" cy="7" r="5.3" stroke="#222" stroke-width="1.5" fill="none"/><path d="M7.2 10.8 L1.5 16.5" stroke="#222" stroke-width="1.6"/></svg>
<div class="t" style="left:80.00px;top:877.73px;font-size:14.5px;color:#3a3a3a;transform:scaleX(1.0752);transform-origin:0 0;">Пошук</div>
<svg style="left:247px;top:869px" width="59" height="31" viewBox="0 0 59 31"><ellipse cx="34" cy="26" rx="24" ry="6" fill="#c9c072"/><path d="M12 27 C20 18 40 17 58 22" stroke="#7aa04a" stroke-width="3" fill="none"/><path d="M6 31 C14 20 28 10 42 2" stroke="#8b5a3c" stroke-width="1.5" fill="none"/><circle cx="30" cy="14" r="5" fill="#f3b6a8"/><circle cx="44" cy="10" r="4" fill="#f0aaa0"/><circle cx="22" cy="22" r="3" fill="#f3c0b0"/><path d="M38 3 L42 0 L44 6 Z" fill="#88b860"/></svg>
<svg style="left:316px;top:876px" width="17" height="16"><rect x="1" y="1" width="10" height="14" stroke="#e8e8e8" stroke-width="1.3" fill="none"/><path d="M14.5 1 L14.5 4 M14.5 6.5 L14.5 9.5 M14.5 12 L14.5 15 M1 4 L11 4 M1 12 L11 12" stroke="#e8e8e8" stroke-width="1.3"/></svg>
<div class="a" style="left:358px;top:877px;width:15px;height:15px;background:#f4f4f4;border-radius:2px"></div>
<svg style="left:361px;top:881px" width="9" height="9"><rect x="0" y="0" width="4" height="4" fill="#f25022"/><rect x="5" y="0" width="4" height="4" fill="#7fba00"/><rect x="0" y="5" width="4" height="4" fill="#00a4ef"/><rect x="5" y="5" width="4" height="4" fill="#ffb900"/></svg>
<svg style="left:396px;top:876px" width="17" height="17"><circle cx="8.5" cy="8.5" r="8" fill="#1fa3e0"/><path d="M2 11 C3 4 14 3 16 9 C16 12 12 12 10 11 C7 10 8 7 10 7 C6 6 3 8 3 13 C5 16 10 17 14 15 C10 17 3 16 2 11Z" fill="#2bc26b"/><path d="M8 8 C11 6.5 15 8 15.5 10 C14 12 9 12 8 10Z" fill="#1a70c8"/></svg>
<svg style="left:434px;top:876px" width="17" height="17"><ellipse cx="8.5" cy="8.5" rx="8" ry="8" fill="#e0202e"/><ellipse cx="8.5" cy="8.5" rx="3.3" ry="5.8" fill="#1f2f3e"/></svg>
<svg style="left:472px;top:876px" width="18" height="17"><path d="M4 5 L11 1 L17 5 L17 16 L4 16 Z" fill="#2f7fd6"/><path d="M4 5 L11 10 L17 5" fill="#5aa5ee"/><rect x="0" y="7" width="9" height="9" rx="1.5" fill="#1565c0"/><circle cx="4.5" cy="11.5" r="2.3" stroke="#fff" stroke-width="1.2" fill="none"/></svg>
<svg style="left:511px;top:877px" width="17" height="15"><path d="M0 1 L6 1 L8 3 L17 3 L17 15 L0 15 Z" fill="#e8b22e"/><rect x="0" y="5" width="17" height="10" fill="#f5cd47"/><rect x="5" y="9" width="7" height="4" fill="#2f7fd6"/></svg>
<div class="a" style="left:550px;top:876px;width:16px;height:16px;background:#e3262e;border-radius:3px"></div>
<svg style="left:552px;top:880px" width="12" height="8"><path d="M0.5 0.5 L3 7 L6 2 L9 7 L11.5 0.5" stroke="#fff" stroke-width="1.8" fill="none"/></svg>
<svg style="left:588px;top:876px" width="17" height="17"><circle cx="13" cy="4" r="2.5" fill="#7b83eb"/><rect x="9" y="7" width="8" height="8" rx="3" fill="#7b83eb"/><circle cx="8" cy="3" r="2.8" fill="#5059c9"/><rect x="4" y="6" width="10" height="10" rx="2" fill="#5059c9"/><rect x="0" y="4.5" width="9" height="9" rx="1" fill="#4b53bc"/><path d="M2 7 L7 7 M4.5 7 L4.5 12" stroke="#fff" stroke-width="1.4"/></svg>
<svg style="left:626px;top:876px" width="17" height="17"><rect x="0" y="0" width="17" height="17" rx="3" fill="#0a1628"/><path d="M7 5 C3 4 2 12 6 12 C7 12 8 11 8.5 9 C9 7 10 5 12 5 C15 5 15 12 12 12 C11 12 10 11 9.5 10" stroke="#3ad0e0" stroke-width="2" fill="none"/><path d="M6 5 C4 5 3 7 3.5 9" stroke="#8a6ae8" stroke-width="2" fill="none"/></svg>
<svg style="left:664px;top:876px" width="17" height="17"><circle cx="8.5" cy="8.5" r="8" fill="#2fa84f"/><path d="M8.5 0.5 A8 8 0 0 1 15.4 4.5 L8.5 4.5 Z M1.6 4.5 A8 8 0 0 1 8.5 0.5 L8.5 4.5 L4.5 8.5 Z" fill="#ea4335"/><path d="M15.4 4.5 A8 8 0 0 1 8.5 16.5 L12 10.5 Z" fill="#fbbc04"/><path d="M8.5 0.5 L15.4 4.5 L8.5 4.5 L5 10 L1.6 4.5 A8 8 0 0 1 8.5 0.5Z" fill="#ea4335"/><circle cx="8.5" cy="8.5" r="4" fill="#fff"/><circle cx="8.5" cy="8.5" r="3" fill="#4285f4"/></svg>
<svg style="left:703px;top:876px" width="17" height="17"><path d="M8.5 0.5 C14 0.5 16.5 3 16.5 8 C16.5 13 14 15 8.5 15 L6 15 L3.5 17 L3.5 14.5 C1.5 13.5 0.5 11.5 0.5 8 C0.5 3 3 0.5 8.5 0.5Z" fill="#7d5ad6"/><path d="M5 4.5 C5 9 8 12 12 12 L12.5 10.5 L10.5 9.5 L9.5 10.3 C8 9.5 7 8.5 6.5 7 L7.3 6 L6.3 4 Z" fill="#fff"/></svg>
<div class="a" style="left:732px;top:867px;width:32px;height:33px;background:#38465a"></div>
<div class="a" style="left:740px;top:876px;width:17px;height:17px;background:#2d6cf0;border-radius:50%"></div>
<div class="t" style="left:742px;top:880px;font-size:8px;color:#fff;font-weight:bold">zm</div>
<svg style="left:779px;top:876px" width="17" height="17"><rect x="5" y="1" width="12" height="15" rx="1" fill="#fff"/><path d="M8 4 L15 4 M8 7 L15 7 M8 10 L15 10 M8 13 L15 13" stroke="#2b579a" stroke-width="1.2"/><rect x="0" y="3" width="10" height="11" rx="1" fill="#2b579a"/><path d="M1.5 5.5 L3 11.5 L5 7 L7 11.5 L8.5 5.5" stroke="#fff" stroke-width="1.1" fill="none"/></svg>
<div class="a" style="left:509px;top:898px;width:22px;height:2px;background:#8fb0d8"></div>
<div class="a" style="left:585px;top:898px;width:22px;height:2px;background:#8fb0d8"></div>
<div class="a" style="left:624px;top:898px;width:22px;height:2px;background:#8fb0d8"></div>
<div class="a" style="left:662px;top:898px;width:22px;height:2px;background:#8fb0d8"></div>
<div class="a" style="left:701px;top:898px;width:22px;height:2px;background:#8fb0d8"></div>
<div class="a" style="left:739px;top:898px;width:22px;height:2px;background:#8fb0d8"></div>
<div class="a" style="left:776px;top:898px;width:22px;height:2px;background:#8fb0d8"></div>
<svg style="left:1166px;top:873px" width="25" height="22"><circle cx="10" cy="10" r="9" fill="#f39a2b"/><path d="M6 20 C3 20 3 15 7 15 C8 11 15 11 16 15 C21 14 22 20 18 20 Z" fill="#dfe6f0"/></svg>
<div class="t" style="left:1200.00px;top:878.45px;font-size:14px;color:#f0f0f0;transform:scaleX(0.8951);transform-origin:0 0;">15°C</div>
<div class="t" style="left:1239.00px;top:878.45px;font-size:14px;color:#f0f0f0;transform:scaleX(1.0527);transform-origin:0 0;">Mostly sunny</div>
<svg style="left:1346px;top:879px" width="14" height="9"><path d="M1 8 L7 1.5 L13 8" stroke="#eee" stroke-width="1.3" fill="none"/></svg>
<svg style="left:1372px;top:876px" width="13" height="17"><rect x="1" y="4" width="8" height="8" rx="1.5" stroke="#eee" stroke-width="1.2" fill="none"/><path d="M9 6 L12 4.5 L12 11.5 L9 10 M2 2 C4 0.5 8 0.5 10 2 M2 14.5 C4 16 8 16 10 14.5" stroke="#eee" stroke-width="1.1" fill="none"/></svg>
<svg style="left:1394px;top:878px" width="17" height="12"><rect x="1" y="3" width="14" height="8" stroke="#eee" stroke-width="1.2" fill="none"/><rect x="2.5" y="4.5" width="7" height="5" fill="#eee"/><path d="M15.5 5.5 L15.5 8.5 M3 0 L3 3" stroke="#eee" stroke-width="1.2"/></svg>
<svg style="left:1421px;top:877px" width="15" height="15"><path d="M1 14 C1 7 7 1 14 1 M4 14 C4 9 9 4 14 4 M7 14 C7 10.5 10.5 7 14 7" stroke="#eee" stroke-width="1.1" fill="none"/><circle cx="12.5" cy="12.5" r="1.6" fill="#eee"/></svg>
<svg style="left:1443px;top:877px" width="19" height="15"><path d="M1 5 L4 5 L8 1.5 L8 13.5 L4 10 L1 10 Z" stroke="#eee" stroke-width="1.1" fill="none"/><path d="M11 4.5 C12.5 6 12.5 9 11 10.5 M14 2.5 C16.5 5 16.5 10 14 12.5" stroke="#aaa" stroke-width="1.1" fill="none"/></svg>
<div class="t" style="left:1472.70px;top:878.50px;font-size:13px;color:#f0f0f0;transform:scaleX(0.8067);transform-origin:0 0;">РУС</div>
<div class="t" style="left:1509.30px;top:878.50px;font-size:13px;color:#f0f0f0;transform:scaleX(0.8711);transform-origin:0 0;">16:11</div>
<svg style="left:1557px;top:876px" width="17" height="16"><path d="M0.5 0.5 L16.5 0.5 L16.5 12 L10 12 L8 15.5 L6 12 L0.5 12 Z" fill="#f4f4f4"/><path d="M3.5 3.5 L13.5 3.5 M3.5 6 L13.5 6 M3.5 8.5 L11 8.5" stroke="#1f2f3e" stroke-width="1"/></svg>
<div class="a" style="left:1595px;top:868px;width:1px;height:32px;background:#5a6578"></div>
</body></html>
